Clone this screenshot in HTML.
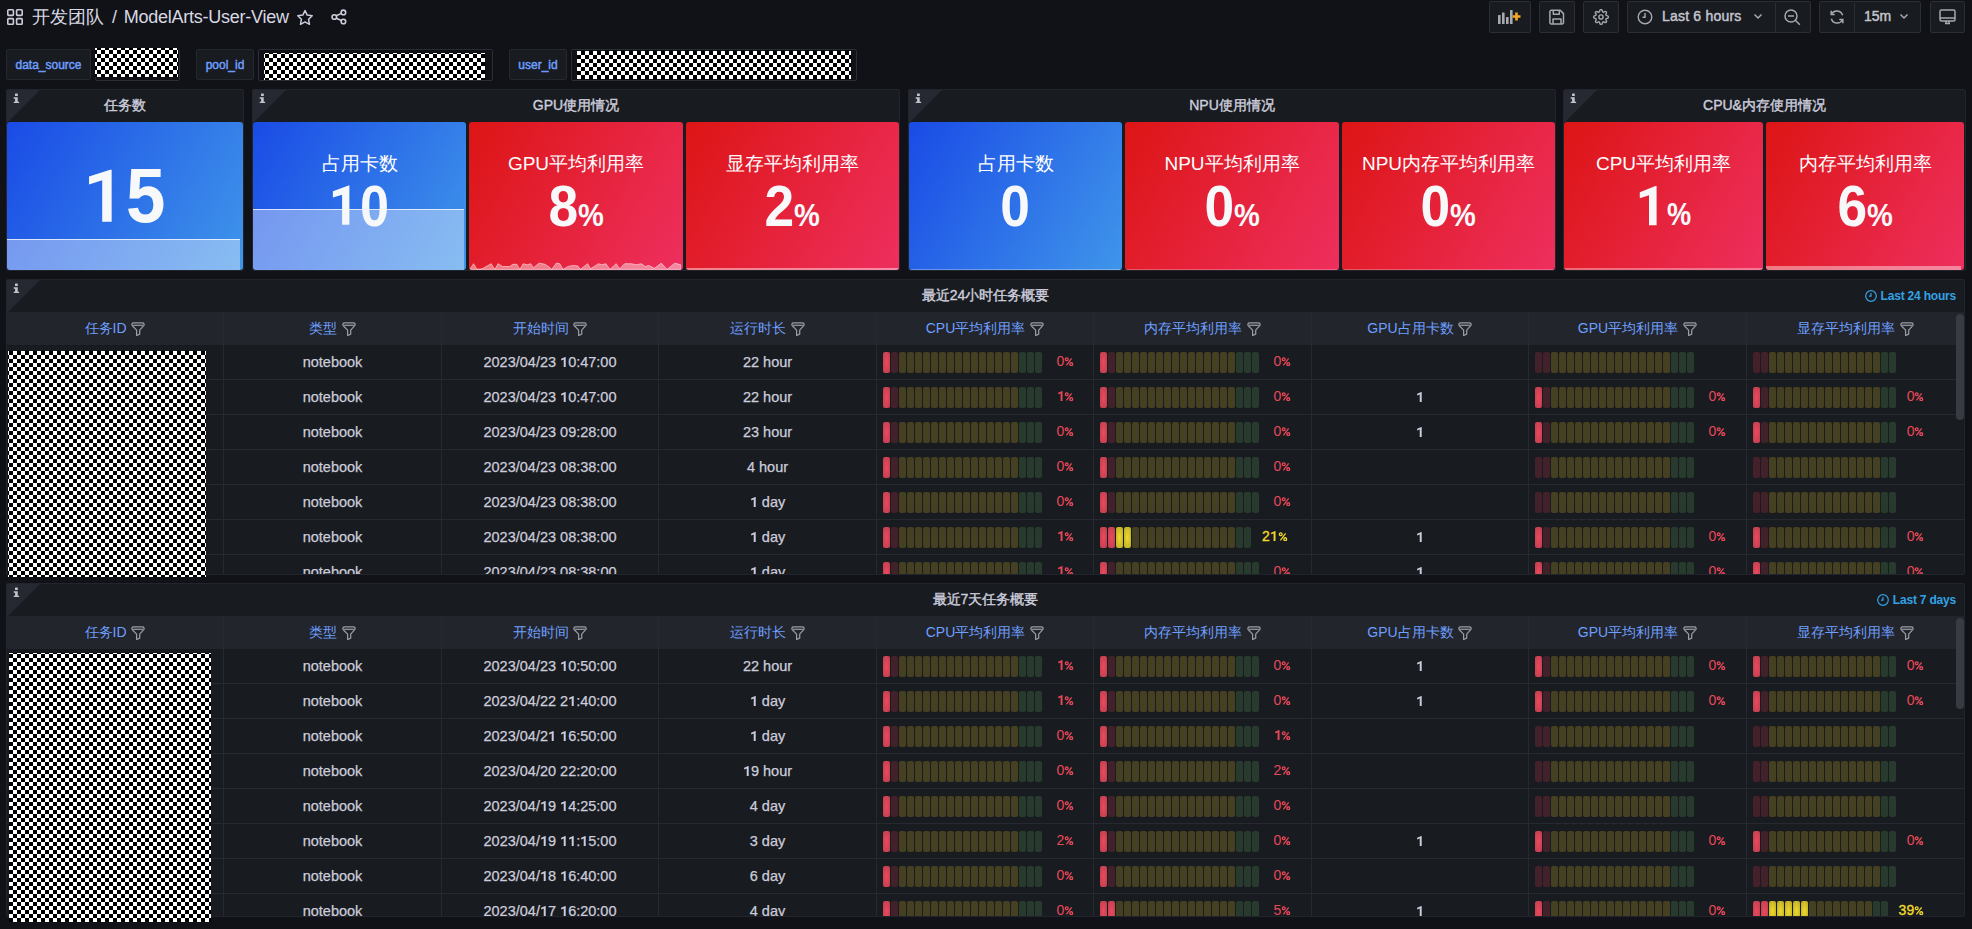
<!DOCTYPE html><html><head><meta charset="utf-8"><style>
*{box-sizing:border-box;margin:0;padding:0}
html,body{width:1972px;height:929px;overflow:hidden;background:#111217;font-family:'Liberation Sans',sans-serif;color:#ccccdc}
.a{position:absolute}
.btn{position:absolute;top:1px;height:32px;background:#181b1f;border:1px solid #2b2e35;border-radius:2px}
.lbl{position:absolute;top:49px;height:31px;background:#181b1f;border:1px solid #25282e;border-radius:2px;color:#6e9fff;font-size:12px;font-weight:400;-webkit-text-stroke:0.45px #6e9fff;line-height:31px;text-align:center}
.vbox{position:absolute;top:49px;height:32px;border:1px solid #2b2e35;border-radius:2px;background:#111217}
.chk{position:absolute;background-image:conic-gradient(#000 0 25%,#fff 0 50%,#000 0 75%,#fff 0 100%);background-size:8px 8px}
.panel{position:absolute;background:#181b1f;border:1px solid #22252b;border-radius:2px;overflow:hidden}
.corner{position:absolute;left:0;top:0;width:0;height:0;border-top:33px solid #262932;border-right:33px solid transparent}
.ci{position:absolute;left:5.5px;top:2.6px}
.ptitle{position:absolute;top:-1px;height:32px;line-height:32px;font-size:14px;font-weight:400;-webkit-text-stroke:0.4px #ccccdc;color:#ccccdc;text-align:center;white-space:nowrap}
.stat{position:absolute;border-radius:3px;overflow:hidden}
.blue{background:linear-gradient(120deg,#1a4be6,#3f95ea)}
.red{background:linear-gradient(120deg,#dd1515,#ee2f5e)}
.st{position:absolute;left:0;right:0;text-align:center;color:#fff;font-size:19px;white-space:nowrap}
.sv{position:absolute;left:0;right:0;text-align:center;color:#f7f8fa;font-weight:700;white-space:nowrap}
.sv small{font-size:0.56em}
</style></head><body>
<svg class="a" style="left:7px;top:9px" width="16" height="16" viewBox="0 0 16 16"><g fill="none" stroke="#ccccdc" stroke-width="1.6"><rect x="0.8" y="0.8" width="5.6" height="5.6" rx="0.8"/><rect x="9.6" y="0.8" width="5.6" height="5.6" rx="0.8"/><rect x="0.8" y="9.6" width="5.6" height="5.6" rx="0.8"/><rect x="9.6" y="9.6" width="5.6" height="5.6" rx="0.8"/></g></svg>
<div class="a" style="left:32px;top:5px;font-size:18px;line-height:24px;color:#d8d9e2;white-space:nowrap">开发团队</div>
<div class="a" style="left:112px;top:5px;font-size:18px;line-height:24px;color:#d8d9e2;white-space:nowrap">/</div>
<div class="a" style="left:123.8px;top:5px;font-size:18px;line-height:24px;color:#d8d9e2;white-space:nowrap;letter-spacing:-0.25px">ModelArts-User-View</div>
<svg class="a" style="left:296px;top:9px" width="18" height="17" viewBox="0 0 18 17"><path d="M9 1.5l2.2 4.6 5 .7-3.6 3.5.9 5L9 12.9l-4.5 2.4.9-5L1.8 6.8l5-.7z" fill="none" stroke="#ccccdc" stroke-width="1.5" stroke-linejoin="round"/></svg>
<svg class="a" style="left:330px;top:8px" width="18" height="18" viewBox="0 0 18 18"><g fill="none" stroke="#ccccdc" stroke-width="1.6"><circle cx="13.4" cy="4.4" r="2.3"/><circle cx="4.3" cy="9" r="2.3"/><circle cx="13.4" cy="13.5" r="2.3"/><path d="M6.3 7.8l5.1-2.4M6.3 10.2l5.1 2.2"/></g></svg>
<div class="btn" style="left:1489px;width:42px"></div>
<div class="btn" style="left:1539px;width:36px"></div>
<div class="btn" style="left:1583px;width:36px"></div>
<div class="btn" style="left:1627px;width:184px"></div>
<div class="btn" style="left:1819px;width:102px"></div>
<div class="btn" style="left:1930px;width:35px"></div>
<div class="a" style="left:1775px;top:3px;width:1px;height:29px;background:#2b2e35"></div>
<div class="a" style="left:1854px;top:3px;width:1px;height:29px;background:#2b2e35"></div>
<svg class="a" style="left:1497px;top:9px" width="28" height="16" viewBox="0 0 28 16"><g fill="#a8a9b0"><rect x="1" y="6" width="2.6" height="9" rx="0.5"/><rect x="5" y="3.5" width="2.6" height="11.5" rx="0.5"/><rect x="9" y="8" width="2.6" height="7" rx="0.5"/><rect x="13" y="1" width="2.6" height="14" rx="0.5"/></g><path d="M15.5 7.5h8M19.5 3.5v8" stroke="#f5a623" stroke-width="2.6"/></svg>
<svg class="a" style="left:1549px;top:9px" width="16" height="16" viewBox="0 0 16 16"><g fill="none" stroke="#a8a9b0" stroke-width="1.5" stroke-linejoin="round"><path d="M2.2 1.3h9l3.3 3.3v9a1.3 1.3 0 0 1-1.3 1.3H2.2a1.3 1.3 0 0 1-1.3-1.3V2.6a1.3 1.3 0 0 1 1.3-1.3z"/><path d="M4.3 1.5v3.8h6V1.5M4 14.7V10h8v4.7"/></g></svg>
<svg class="a" style="left:1593px;top:9px" width="16" height="16" viewBox="0 0 24 24"><g fill="none" stroke="#a8a9b0" stroke-width="2.1"><circle cx="12" cy="12" r="3.2"/><path d="M19.4 15a1.65 1.65 0 0 0 .33 1.82l.06.06a2 2 0 1 1-2.83 2.83l-.06-.06a1.65 1.65 0 0 0-1.82-.33 1.65 1.65 0 0 0-1 1.51V21a2 2 0 1 1-4 0v-.09A1.65 1.65 0 0 0 9 19.4a1.65 1.65 0 0 0-1.82.33l-.06.06a2 2 0 1 1-2.83-2.83l.06-.06A1.65 1.65 0 0 0 4.68 15a1.65 1.65 0 0 0-1.51-1H3a2 2 0 1 1 0-4h.09A1.65 1.65 0 0 0 4.6 9a1.65 1.65 0 0 0-.33-1.82l-.06-.06a2 2 0 1 1 2.83-2.83l.06.06A1.65 1.65 0 0 0 9 4.68a1.65 1.65 0 0 0 1-1.51V3a2 2 0 1 1 4 0v.09a1.65 1.65 0 0 0 1 1.51 1.65 1.65 0 0 0 1.82-.33l.06-.06a2 2 0 1 1 2.83 2.83l-.06.06A1.65 1.65 0 0 0 19.4 9a1.65 1.65 0 0 0 1.51 1H21a2 2 0 1 1 0 4h-.09a1.65 1.65 0 0 0-1.51 1z"/></g></svg>
<svg class="a" style="left:1637px;top:9px" width="16" height="16" viewBox="0 0 16 16"><g fill="none" stroke="#a8a9b0" stroke-width="1.4"><circle cx="8" cy="8" r="6.8"/><path d="M8 4v4.2H5.6"/></g></svg>
<div class="a" style="left:1662px;top:8px;font-size:14px;font-weight:400;-webkit-text-stroke:0.45px #c4c5ce;color:#c4c5ce;line-height:17px;letter-spacing:0.2px">Last 6 hours</div>
<svg class="a" style="left:1753px;top:13px" width="10" height="7" viewBox="0 0 10 7"><path d="M1.5 1.5l3.5 3.5 3.5-3.5" fill="none" stroke="#a8a9b0" stroke-width="1.5"/></svg>
<svg class="a" style="left:1784px;top:9px" width="17" height="17" viewBox="0 0 17 17"><g fill="none" stroke="#a8a9b0" stroke-width="1.5"><circle cx="7" cy="7" r="6"/><path d="M4 7h6M11.3 11.3l4.5 4.5"/></g></svg>
<svg class="a" style="left:1829px;top:9px" width="16" height="16" viewBox="0 0 16 16"><g fill="none" stroke="#a8a9b0" stroke-width="1.5"><path d="M13.6 6.3A6 6 0 0 0 2.6 5"/><path d="M2.4 9.7A6 6 0 0 0 13.4 11"/><path d="M2.2 1.8V5.4h3.5M13.8 14.2v-3.6h-3.5"/></g></svg>
<div class="a" style="left:1864px;top:8px;font-size:14px;font-weight:400;-webkit-text-stroke:0.45px #c4c5ce;color:#c4c5ce;line-height:17px">15m</div>
<svg class="a" style="left:1899px;top:13px" width="10" height="7" viewBox="0 0 10 7"><path d="M1.5 1.5l3.5 3.5 3.5-3.5" fill="none" stroke="#a8a9b0" stroke-width="1.5"/></svg>
<svg class="a" style="left:1939px;top:9px" width="17" height="16" viewBox="0 0 17 16"><g fill="none" stroke="#a8a9b0" stroke-width="1.5"><rect x="1" y="1" width="15" height="11" rx="1.5"/><path d="M1 9h15M6 14.5h5"/><path d="M7 12v2.5M10 12v2.5"/></g></svg>
<div class="lbl" style="left:6px;width:85px">data_source</div>
<div class="vbox" style="left:95px;width:85px"></div>
<div class="chk" style="left:95px;top:48px;width:83px;height:29px;background-position:6px 6px"></div>
<div class="lbl" style="left:196px;width:58px">pool_id</div>
<div class="vbox" style="left:258px;width:235px"></div>
<div class="chk" style="left:264px;top:53px;width:221px;height:27px;background-position:5px 1px"></div>
<div class="lbl" style="left:509px;width:58px">user_id</div>
<div class="vbox" style="left:571px;width:286px"></div>
<div class="chk" style="left:577px;top:51px;width:274px;height:28px;background-position:4px 4px"></div>
<div class="panel" style="left:6px;top:89px;width:238px;height:182px"><div class="corner"></div><svg class="ci" width="7" height="10.5" viewBox="0 0 8 12"><rect x="2.3" y="0.5" width="3.2" height="3" rx="0.6" fill="#c4c4cc"/><path d="M0.8 4.8h4.6v5.2h1.6v1.7H0.8V10h1.6V6.5H0.8z" fill="#c4c4cc"/></svg>
<div class="ptitle" style="left:0;right:0">任务数</div>
</div>
<div class="panel" style="left:252px;top:89px;width:648px;height:182px"><div class="corner"></div><svg class="ci" width="7" height="10.5" viewBox="0 0 8 12"><rect x="2.3" y="0.5" width="3.2" height="3" rx="0.6" fill="#c4c4cc"/><path d="M0.8 4.8h4.6v5.2h1.6v1.7H0.8V10h1.6V6.5H0.8z" fill="#c4c4cc"/></svg>
<div class="ptitle" style="left:0;right:0">GPU使用情况</div>
</div>
<div class="panel" style="left:908px;top:89px;width:648px;height:182px"><div class="corner"></div><svg class="ci" width="7" height="10.5" viewBox="0 0 8 12"><rect x="2.3" y="0.5" width="3.2" height="3" rx="0.6" fill="#c4c4cc"/><path d="M0.8 4.8h4.6v5.2h1.6v1.7H0.8V10h1.6V6.5H0.8z" fill="#c4c4cc"/></svg>
<div class="ptitle" style="left:0;right:0">NPU使用情况</div>
</div>
<div class="panel" style="left:1563px;top:89px;width:403px;height:182px"><div class="corner"></div><svg class="ci" width="7" height="10.5" viewBox="0 0 8 12"><rect x="2.3" y="0.5" width="3.2" height="3" rx="0.6" fill="#c4c4cc"/><path d="M0.8 4.8h4.6v5.2h1.6v1.7H0.8V10h1.6V6.5H0.8z" fill="#c4c4cc"/></svg>
<div class="ptitle" style="left:0;right:0">CPU&amp;内存使用情况</div>
</div>
<div class="stat blue" style="left:7px;top:122px;width:236px;height:148px">
<div class="a" style="left:0;top:117px;width:233px;bottom:0;background:rgba(255,255,255,0.38);border-top:1px solid rgba(255,255,255,0.75)"></div>
<div class="sv" style="top:33.5px;height:78px;line-height:78px;font-size:78px"><span style="display:inline-block;transform:scaleX(0.95)"></span></div>
</div>
<svg class="a" style="left:7px;top:122px" width="236" height="148"><path d="M104.65 47.8V99.8H95.2V58.3L82 62.5V54.6L103.1 47.8Z" fill="#f7f8fa"/></svg>
<div class="a" style="left:126px;top:157px;height:77px;line-height:77px;font-size:77px;font-weight:700;color:#f7f8fa;transform:scaleX(0.92);transform-origin:0 0">5</div>
<div class="stat blue" style="left:253px;top:122px;width:213px;height:148px">
<div class="a" style="left:0;top:87px;width:211px;bottom:0;background:rgba(255,255,255,0.38);border-top:1px solid rgba(255,255,255,0.75)"></div>
<div class="st" style="top:30px;height:24px;line-height:24px">占用卡数</div>
</div>
<svg class="a" style="left:253px;top:122px" width="213" height="148"><path d="M96.4 63.6V102.8H89.1V72.8L79.9 75.6V69.2L95.6 63.6Z" fill="#f7f8fa"/></svg>
<div class="a" style="left:360px;top:177px;height:58px;line-height:58px;font-size:58px;font-weight:700;color:#f7f8fa;transform:scaleX(0.9);transform-origin:0 0">0</div>
<div class="stat red" style="left:469px;top:122px;width:214px;height:148px">
<svg class="a" style="left:0;top:0" width="214" height="148"><path d="M0.6 147.4 L4.6 141.7 L8.0 147.4 L13.1 146.8 L22.2 141.7 L25.7 147.4 L29.1 141.7 L33.7 144.5 L40.5 144.5 L43.9 142.3 L47.9 142.3 L50.8 147.4 L54.2 141.7 L58.2 142.8 L61.6 141.7 L64.5 145.7 L70.2 141.1 L75.9 142.3 L80.4 145.1 L82.7 147.4 L87.3 141.1 L90.7 141.7 L94.1 147.4 L98.7 144.5 L104.4 143.4 L109.0 144.0 L111.2 147.4 L118.7 141.7 L121.5 146.8 L129.5 141.7 L132.9 142.8 L136.9 141.7 L140.9 147.4 L147.2 141.7 L150.6 146.8 L155.7 141.7 L162.6 141.7 L167.2 142.8 L172.3 141.7 L176.3 144.5 L179.7 143.4 L185.4 146.3 L192.3 141.1 L198.0 147.4 L205.9 141.1 L211.7 142.8 L211.7 147.4 Z" fill="rgba(255,255,255,0.42)" stroke="rgba(255,255,255,0.5)" stroke-width="1" stroke-linejoin="round"/></svg>
<div class="st" style="top:30px;height:24px;line-height:24px">GPU平均利用率</div>
<div class="sv" style="top:54.5px;height:58px;line-height:58px;font-size:58px"><span style="display:inline-block;transform:scaleX(0.92)">8<span style="font-size:0.545em">%</span></span></div>
</div>
<div class="stat red" style="left:686px;top:122px;width:213px;height:148px">
<div class="a" style="left:0;bottom:0;width:213px;height:2px;background:rgba(255,255,255,0.45)"></div>
<div class="st" style="top:30px;height:24px;line-height:24px">显存平均利用率</div>
<div class="sv" style="top:54.5px;height:58px;line-height:58px;font-size:58px"><span style="display:inline-block;transform:scaleX(0.92)">2<span style="font-size:0.545em">%</span></span></div>
</div>
<div class="stat blue" style="left:909px;top:122px;width:213px;height:148px">
<div class="a" style="left:0;bottom:0;width:213px;height:1px;background:rgba(255,255,255,0.3)"></div>
<div class="st" style="top:30px;height:24px;line-height:24px">占用卡数</div>
<div class="sv" style="top:54.5px;height:58px;line-height:58px;font-size:58px"><span style="display:inline-block;transform:scaleX(0.92)">0</span></div>
</div>
<div class="stat red" style="left:1125px;top:122px;width:214px;height:148px">
<div class="a" style="left:0;bottom:0;width:214px;height:1px;background:rgba(255,255,255,0.25)"></div>
<div class="st" style="top:30px;height:24px;line-height:24px">NPU平均利用率</div>
<div class="sv" style="top:54.5px;height:58px;line-height:58px;font-size:58px"><span style="display:inline-block;transform:scaleX(0.92)">0<span style="font-size:0.545em">%</span></span></div>
</div>
<div class="stat red" style="left:1342px;top:122px;width:213px;height:148px">
<div class="a" style="left:0;bottom:0;width:213px;height:1px;background:rgba(255,255,255,0.25)"></div>
<div class="st" style="top:30px;height:24px;line-height:24px">NPU内存平均利用率</div>
<div class="sv" style="top:54.5px;height:58px;line-height:58px;font-size:58px"><span style="display:inline-block;transform:scaleX(0.92)">0<span style="font-size:0.545em">%</span></span></div>
</div>
<div class="stat red" style="left:1564px;top:122px;width:199px;height:148px">
<div class="a" style="left:0;bottom:0;width:199px;height:2px;background:rgba(255,255,255,0.35)"></div>
<div class="st" style="top:30px;height:24px;line-height:24px">CPU平均利用率</div>
</div>
<svg class="a" style="left:1564px;top:122px" width="199" height="148"><path d="M92.6 63.9V103.2H85V73.2L75.8 76.2V70.2L91.5 63.9Z" fill="#f7f8fa"/></svg>
<div class="a" style="left:1666.5px;top:194px;height:40px;line-height:40px;font-size:31.6px;font-weight:700;color:#f7f8fa;transform:scaleX(0.86);transform-origin:0 0">%</div>
<div class="stat red" style="left:1766px;top:122px;width:198px;height:148px">
<div class="a" style="left:0;bottom:0;width:195px;height:4px;background:rgba(255,255,255,0.42)"></div>
<div class="st" style="top:30px;height:24px;line-height:24px">内存平均利用率</div>
<div class="sv" style="top:54.5px;height:58px;line-height:58px;font-size:58px"><span style="display:inline-block;transform:scaleX(0.92)">6<span style="font-size:0.545em">%</span></span></div>
</div>
<style>
.th{position:absolute;height:33px;background:#22252b}
.hd{position:absolute;top:0;height:33px;line-height:33px;color:#6e9fff;font-size:14px;text-align:center;white-space:nowrap}
.td{position:absolute;color:#ccccdc;-webkit-text-stroke:0.25px #ccccdc;font-size:14.5px;text-align:center;white-space:nowrap;height:35px;line-height:35px}
.vl{position:absolute;width:1px;background:#26292f}
.hl{position:absolute;height:1px;background:#26292f}
.cell{position:absolute;top:0;width:7px;height:21px;border-radius:2px}
.rl{background:radial-gradient(ellipse at center,#ea4a5c 0%,#bd3e4f 100%)}
.yl{background:radial-gradient(ellipse at center,#f0da2a 0%,#b8a828 100%)}
.rd{background:#43212a}.yd{background:#454021}.gd{background:#283a2e}
.pv{position:absolute;font-size:14px;line-height:21px;white-space:nowrap}
.pc{display:inline-block;transform:scaleX(0.8);transform-origin:0 0}
</style>
<div class="panel" style="left:6px;top:279px;width:1959px;height:296px">
<div class="corner"></div><svg class="ci" width="7" height="10.5" viewBox="0 0 8 12"><rect x="2.3" y="0.5" width="3.2" height="3" rx="0.6" fill="#c4c4cc"/><path d="M0.8 4.8h4.6v5.2h1.6v1.7H0.8V10h1.6V6.5H0.8z" fill="#c4c4cc"/></svg>
<div class="ptitle" style="left:0;right:0">最近24小时任务概要</div>
</div>
<div class="a" style="right:16px;top:289px;font-size:12px;font-weight:700;letter-spacing:-0.2px;color:#33a2e5;line-height:15px;white-space:nowrap"><svg style="display:inline-block;vertical-align:middle;margin-right:4px;margin-top:-1px" width="12" height="12" viewBox="0 0 12 12"><g fill="none" stroke="#33a2e5" stroke-width="1.2"><circle cx="6" cy="6" r="5.3"/><path d="M6 3v3.2H4"/></g></svg>Last 24 hours</div>
<div class="th" style="left:7px;top:312px;width:1957px"></div>
<div class="hd" style="left:7px;top:312px;width:216px">任务ID<svg style="display:inline-block;vertical-align:middle;margin-left:5px;margin-top:-3px;position:relative;top:0.8px;left:-0.5px" width="14" height="14" viewBox="0 0 14 14"><g fill="none" stroke="#9a9ba4" stroke-width="1.25" stroke-linejoin="round"><path d="M2.6 0.9H11.4A1.7 1.7 0 0 1 12.7 3.7L8.7 8.1V12.2L5.6 13.5V8.1L1.3 3.7A1.7 1.7 0 0 1 2.6 0.9Z"/><path d="M2.2 3.3H11.8"/></g></svg></div>
<div class="hd" style="left:224px;top:312px;width:217px">类型<svg style="display:inline-block;vertical-align:middle;margin-left:5px;margin-top:-3px;position:relative;top:0.8px;left:-0.5px" width="14" height="14" viewBox="0 0 14 14"><g fill="none" stroke="#9a9ba4" stroke-width="1.25" stroke-linejoin="round"><path d="M2.6 0.9H11.4A1.7 1.7 0 0 1 12.7 3.7L8.7 8.1V12.2L5.6 13.5V8.1L1.3 3.7A1.7 1.7 0 0 1 2.6 0.9Z"/><path d="M2.2 3.3H11.8"/></g></svg></div>
<div class="hd" style="left:442px;top:312px;width:216px">开始时间<svg style="display:inline-block;vertical-align:middle;margin-left:5px;margin-top:-3px;position:relative;top:0.8px;left:-0.5px" width="14" height="14" viewBox="0 0 14 14"><g fill="none" stroke="#9a9ba4" stroke-width="1.25" stroke-linejoin="round"><path d="M2.6 0.9H11.4A1.7 1.7 0 0 1 12.7 3.7L8.7 8.1V12.2L5.6 13.5V8.1L1.3 3.7A1.7 1.7 0 0 1 2.6 0.9Z"/><path d="M2.2 3.3H11.8"/></g></svg></div>
<div class="hd" style="left:659px;top:312px;width:217px">运行时长<svg style="display:inline-block;vertical-align:middle;margin-left:5px;margin-top:-3px;position:relative;top:0.8px;left:-0.5px" width="14" height="14" viewBox="0 0 14 14"><g fill="none" stroke="#9a9ba4" stroke-width="1.25" stroke-linejoin="round"><path d="M2.6 0.9H11.4A1.7 1.7 0 0 1 12.7 3.7L8.7 8.1V12.2L5.6 13.5V8.1L1.3 3.7A1.7 1.7 0 0 1 2.6 0.9Z"/><path d="M2.2 3.3H11.8"/></g></svg></div>
<div class="hd" style="left:877px;top:312px;width:216px">CPU平均利用率<svg style="display:inline-block;vertical-align:middle;margin-left:5px;margin-top:-3px;position:relative;top:0.8px;left:-0.5px" width="14" height="14" viewBox="0 0 14 14"><g fill="none" stroke="#9a9ba4" stroke-width="1.25" stroke-linejoin="round"><path d="M2.6 0.9H11.4A1.7 1.7 0 0 1 12.7 3.7L8.7 8.1V12.2L5.6 13.5V8.1L1.3 3.7A1.7 1.7 0 0 1 2.6 0.9Z"/><path d="M2.2 3.3H11.8"/></g></svg></div>
<div class="hd" style="left:1094px;top:312px;width:217px">内存平均利用率<svg style="display:inline-block;vertical-align:middle;margin-left:5px;margin-top:-3px;position:relative;top:0.8px;left:-0.5px" width="14" height="14" viewBox="0 0 14 14"><g fill="none" stroke="#9a9ba4" stroke-width="1.25" stroke-linejoin="round"><path d="M2.6 0.9H11.4A1.7 1.7 0 0 1 12.7 3.7L8.7 8.1V12.2L5.6 13.5V8.1L1.3 3.7A1.7 1.7 0 0 1 2.6 0.9Z"/><path d="M2.2 3.3H11.8"/></g></svg></div>
<div class="hd" style="left:1312px;top:312px;width:216px">GPU占用卡数<svg style="display:inline-block;vertical-align:middle;margin-left:5px;margin-top:-3px;position:relative;top:0.8px;left:-0.5px" width="14" height="14" viewBox="0 0 14 14"><g fill="none" stroke="#9a9ba4" stroke-width="1.25" stroke-linejoin="round"><path d="M2.6 0.9H11.4A1.7 1.7 0 0 1 12.7 3.7L8.7 8.1V12.2L5.6 13.5V8.1L1.3 3.7A1.7 1.7 0 0 1 2.6 0.9Z"/><path d="M2.2 3.3H11.8"/></g></svg></div>
<div class="hd" style="left:1529px;top:312px;width:217px">GPU平均利用率<svg style="display:inline-block;vertical-align:middle;margin-left:5px;margin-top:-3px;position:relative;top:0.8px;left:-0.5px" width="14" height="14" viewBox="0 0 14 14"><g fill="none" stroke="#9a9ba4" stroke-width="1.25" stroke-linejoin="round"><path d="M2.6 0.9H11.4A1.7 1.7 0 0 1 12.7 3.7L8.7 8.1V12.2L5.6 13.5V8.1L1.3 3.7A1.7 1.7 0 0 1 2.6 0.9Z"/><path d="M2.2 3.3H11.8"/></g></svg></div>
<div class="hd" style="left:1747px;top:312px;width:217px">显存平均利用率<svg style="display:inline-block;vertical-align:middle;margin-left:5px;margin-top:-3px;position:relative;top:0.8px;left:-0.5px" width="14" height="14" viewBox="0 0 14 14"><g fill="none" stroke="#9a9ba4" stroke-width="1.25" stroke-linejoin="round"><path d="M2.6 0.9H11.4A1.7 1.7 0 0 1 12.7 3.7L8.7 8.1V12.2L5.6 13.5V8.1L1.3 3.7A1.7 1.7 0 0 1 2.6 0.9Z"/><path d="M2.2 3.3H11.8"/></g></svg></div>
<div class="vl" style="left:223px;top:312px;height:262px"></div>
<div class="vl" style="left:441px;top:312px;height:262px"></div>
<div class="vl" style="left:658px;top:312px;height:262px"></div>
<div class="vl" style="left:876px;top:312px;height:262px"></div>
<div class="vl" style="left:1093px;top:312px;height:262px"></div>
<div class="vl" style="left:1311px;top:312px;height:262px"></div>
<div class="vl" style="left:1528px;top:312px;height:262px"></div>
<div class="vl" style="left:1746px;top:312px;height:262px"></div>
<div class="a" style="left:7px;top:345px;width:1957px;height:229px;overflow:hidden">
<div class="hl" style="left:0;top:34px;width:1957px"></div>
<div class="td" style="left:217px;top:0px;width:217px">notebook</div>
<div class="td" style="left:435px;top:0px;width:216px">2023/04/23 <svg width="8.06" height="10.38" style="vertical-align:baseline;display:inline-block"><path d="M5.70 0V10.38H3.73V2.59L1.14 3.42V1.76L5.28 0Z" fill="#ccccdc"/></svg>0:47:00</div>
<div class="td" style="left:652px;top:0px;width:217px">22 hour</div>
<div class="a" style="left:876px;top:7px;width:160px;height:21px"><div class="cell rl" style="left:0px"></div><div class="cell rd" style="left:8px"></div><div class="cell yd" style="left:16px"></div><div class="cell yd" style="left:24px"></div><div class="cell yd" style="left:32px"></div><div class="cell yd" style="left:40px"></div><div class="cell yd" style="left:48px"></div><div class="cell yd" style="left:56px"></div><div class="cell yd" style="left:64px"></div><div class="cell yd" style="left:72px"></div><div class="cell yd" style="left:80px"></div><div class="cell yd" style="left:88px"></div><div class="cell yd" style="left:96px"></div><div class="cell yd" style="left:104px"></div><div class="cell yd" style="left:112px"></div><div class="cell yd" style="left:120px"></div><div class="cell yd" style="left:128px"></div><div class="cell gd" style="left:136px"></div><div class="cell gd" style="left:144px"></div><div class="cell gd" style="left:152px"></div></div>
<div class="pv" style="left:1049.5px;top:6px;color:#e8485a">0<svg width="10" height="10.4" style="vertical-align:baseline;display:inline-block"><g fill="none" stroke="#e8485a" stroke-width="1.3"><circle cx="2.75" cy="3.25" r="1.4"/><circle cx="7.25" cy="8.15" r="1.4"/></g><path d="M2.4 9.3L7.6 2.3" stroke="#e8485a" stroke-width="1.25"/></svg></div>
<div class="a" style="left:1093px;top:7px;width:160px;height:21px"><div class="cell rl" style="left:0px"></div><div class="cell rd" style="left:8px"></div><div class="cell yd" style="left:16px"></div><div class="cell yd" style="left:24px"></div><div class="cell yd" style="left:32px"></div><div class="cell yd" style="left:40px"></div><div class="cell yd" style="left:48px"></div><div class="cell yd" style="left:56px"></div><div class="cell yd" style="left:64px"></div><div class="cell yd" style="left:72px"></div><div class="cell yd" style="left:80px"></div><div class="cell yd" style="left:88px"></div><div class="cell yd" style="left:96px"></div><div class="cell yd" style="left:104px"></div><div class="cell yd" style="left:112px"></div><div class="cell yd" style="left:120px"></div><div class="cell yd" style="left:128px"></div><div class="cell gd" style="left:136px"></div><div class="cell gd" style="left:144px"></div><div class="cell gd" style="left:152px"></div></div>
<div class="pv" style="left:1266.5px;top:6px;color:#e8485a">0<svg width="10" height="10.4" style="vertical-align:baseline;display:inline-block"><g fill="none" stroke="#e8485a" stroke-width="1.3"><circle cx="2.75" cy="3.25" r="1.4"/><circle cx="7.25" cy="8.15" r="1.4"/></g><path d="M2.4 9.3L7.6 2.3" stroke="#e8485a" stroke-width="1.25"/></svg></div>
<div class="a" style="left:1528px;top:7px;width:160px;height:21px"><div class="cell rd" style="left:0px"></div><div class="cell rd" style="left:8px"></div><div class="cell yd" style="left:16px"></div><div class="cell yd" style="left:24px"></div><div class="cell yd" style="left:32px"></div><div class="cell yd" style="left:40px"></div><div class="cell yd" style="left:48px"></div><div class="cell yd" style="left:56px"></div><div class="cell yd" style="left:64px"></div><div class="cell yd" style="left:72px"></div><div class="cell yd" style="left:80px"></div><div class="cell yd" style="left:88px"></div><div class="cell yd" style="left:96px"></div><div class="cell yd" style="left:104px"></div><div class="cell yd" style="left:112px"></div><div class="cell yd" style="left:120px"></div><div class="cell yd" style="left:128px"></div><div class="cell gd" style="left:136px"></div><div class="cell gd" style="left:144px"></div><div class="cell gd" style="left:152px"></div></div>
<div class="a" style="left:1746px;top:7px;width:144px;height:21px"><div class="cell rd" style="left:0px"></div><div class="cell rd" style="left:8px"></div><div class="cell yd" style="left:16px"></div><div class="cell yd" style="left:24px"></div><div class="cell yd" style="left:32px"></div><div class="cell yd" style="left:40px"></div><div class="cell yd" style="left:48px"></div><div class="cell yd" style="left:56px"></div><div class="cell yd" style="left:64px"></div><div class="cell yd" style="left:72px"></div><div class="cell yd" style="left:80px"></div><div class="cell yd" style="left:88px"></div><div class="cell yd" style="left:96px"></div><div class="cell yd" style="left:104px"></div><div class="cell yd" style="left:112px"></div><div class="cell yd" style="left:120px"></div><div class="cell gd" style="left:128px"></div><div class="cell gd" style="left:136px"></div></div>
<div class="hl" style="left:0;top:69px;width:1957px"></div>
<div class="td" style="left:217px;top:35px;width:217px">notebook</div>
<div class="td" style="left:435px;top:35px;width:216px">2023/04/23 <svg width="8.06" height="10.38" style="vertical-align:baseline;display:inline-block"><path d="M5.70 0V10.38H3.73V2.59L1.14 3.42V1.76L5.28 0Z" fill="#ccccdc"/></svg>0:47:00</div>
<div class="td" style="left:652px;top:35px;width:217px">22 hour</div>
<div class="td" style="left:1305px;top:35px;width:216px"><svg width="8.06" height="10.38" style="vertical-align:baseline;display:inline-block"><path d="M5.70 0V10.38H3.73V2.59L1.14 3.42V1.76L5.28 0Z" fill="#ccccdc"/></svg></div>
<div class="a" style="left:876px;top:42px;width:160px;height:21px"><div class="cell rl" style="left:0px"></div><div class="cell rd" style="left:8px"></div><div class="cell yd" style="left:16px"></div><div class="cell yd" style="left:24px"></div><div class="cell yd" style="left:32px"></div><div class="cell yd" style="left:40px"></div><div class="cell yd" style="left:48px"></div><div class="cell yd" style="left:56px"></div><div class="cell yd" style="left:64px"></div><div class="cell yd" style="left:72px"></div><div class="cell yd" style="left:80px"></div><div class="cell yd" style="left:88px"></div><div class="cell yd" style="left:96px"></div><div class="cell yd" style="left:104px"></div><div class="cell yd" style="left:112px"></div><div class="cell yd" style="left:120px"></div><div class="cell yd" style="left:128px"></div><div class="cell gd" style="left:136px"></div><div class="cell gd" style="left:144px"></div><div class="cell gd" style="left:152px"></div></div>
<div class="pv" style="left:1049.5px;top:41px;color:#e8485a"><svg width="7.78" height="10.02" style="vertical-align:baseline;display:inline-block"><path d="M5.50 0V10.02H3.60V2.50L1.10 3.30V1.70L5.10 0Z" fill="#e8485a"/></svg><svg width="10" height="10.4" style="vertical-align:baseline;display:inline-block"><g fill="none" stroke="#e8485a" stroke-width="1.3"><circle cx="2.75" cy="3.25" r="1.4"/><circle cx="7.25" cy="8.15" r="1.4"/></g><path d="M2.4 9.3L7.6 2.3" stroke="#e8485a" stroke-width="1.25"/></svg></div>
<div class="a" style="left:1093px;top:42px;width:160px;height:21px"><div class="cell rl" style="left:0px"></div><div class="cell rd" style="left:8px"></div><div class="cell yd" style="left:16px"></div><div class="cell yd" style="left:24px"></div><div class="cell yd" style="left:32px"></div><div class="cell yd" style="left:40px"></div><div class="cell yd" style="left:48px"></div><div class="cell yd" style="left:56px"></div><div class="cell yd" style="left:64px"></div><div class="cell yd" style="left:72px"></div><div class="cell yd" style="left:80px"></div><div class="cell yd" style="left:88px"></div><div class="cell yd" style="left:96px"></div><div class="cell yd" style="left:104px"></div><div class="cell yd" style="left:112px"></div><div class="cell yd" style="left:120px"></div><div class="cell yd" style="left:128px"></div><div class="cell gd" style="left:136px"></div><div class="cell gd" style="left:144px"></div><div class="cell gd" style="left:152px"></div></div>
<div class="pv" style="left:1266.5px;top:41px;color:#e8485a">0<svg width="10" height="10.4" style="vertical-align:baseline;display:inline-block"><g fill="none" stroke="#e8485a" stroke-width="1.3"><circle cx="2.75" cy="3.25" r="1.4"/><circle cx="7.25" cy="8.15" r="1.4"/></g><path d="M2.4 9.3L7.6 2.3" stroke="#e8485a" stroke-width="1.25"/></svg></div>
<div class="a" style="left:1528px;top:42px;width:160px;height:21px"><div class="cell rl" style="left:0px"></div><div class="cell rd" style="left:8px"></div><div class="cell yd" style="left:16px"></div><div class="cell yd" style="left:24px"></div><div class="cell yd" style="left:32px"></div><div class="cell yd" style="left:40px"></div><div class="cell yd" style="left:48px"></div><div class="cell yd" style="left:56px"></div><div class="cell yd" style="left:64px"></div><div class="cell yd" style="left:72px"></div><div class="cell yd" style="left:80px"></div><div class="cell yd" style="left:88px"></div><div class="cell yd" style="left:96px"></div><div class="cell yd" style="left:104px"></div><div class="cell yd" style="left:112px"></div><div class="cell yd" style="left:120px"></div><div class="cell yd" style="left:128px"></div><div class="cell gd" style="left:136px"></div><div class="cell gd" style="left:144px"></div><div class="cell gd" style="left:152px"></div></div>
<div class="pv" style="left:1701.5px;top:41px;color:#e8485a">0<svg width="10" height="10.4" style="vertical-align:baseline;display:inline-block"><g fill="none" stroke="#e8485a" stroke-width="1.3"><circle cx="2.75" cy="3.25" r="1.4"/><circle cx="7.25" cy="8.15" r="1.4"/></g><path d="M2.4 9.3L7.6 2.3" stroke="#e8485a" stroke-width="1.25"/></svg></div>
<div class="a" style="left:1746px;top:42px;width:144px;height:21px"><div class="cell rl" style="left:0px"></div><div class="cell rd" style="left:8px"></div><div class="cell yd" style="left:16px"></div><div class="cell yd" style="left:24px"></div><div class="cell yd" style="left:32px"></div><div class="cell yd" style="left:40px"></div><div class="cell yd" style="left:48px"></div><div class="cell yd" style="left:56px"></div><div class="cell yd" style="left:64px"></div><div class="cell yd" style="left:72px"></div><div class="cell yd" style="left:80px"></div><div class="cell yd" style="left:88px"></div><div class="cell yd" style="left:96px"></div><div class="cell yd" style="left:104px"></div><div class="cell yd" style="left:112px"></div><div class="cell yd" style="left:120px"></div><div class="cell gd" style="left:128px"></div><div class="cell gd" style="left:136px"></div></div>
<div class="pv" style="left:1899.7px;top:41px;color:#e8485a">0<svg width="10" height="10.4" style="vertical-align:baseline;display:inline-block"><g fill="none" stroke="#e8485a" stroke-width="1.3"><circle cx="2.75" cy="3.25" r="1.4"/><circle cx="7.25" cy="8.15" r="1.4"/></g><path d="M2.4 9.3L7.6 2.3" stroke="#e8485a" stroke-width="1.25"/></svg></div>
<div class="hl" style="left:0;top:104px;width:1957px"></div>
<div class="td" style="left:217px;top:70px;width:217px">notebook</div>
<div class="td" style="left:435px;top:70px;width:216px">2023/04/23 09:28:00</div>
<div class="td" style="left:652px;top:70px;width:217px">23 hour</div>
<div class="td" style="left:1305px;top:70px;width:216px"><svg width="8.06" height="10.38" style="vertical-align:baseline;display:inline-block"><path d="M5.70 0V10.38H3.73V2.59L1.14 3.42V1.76L5.28 0Z" fill="#ccccdc"/></svg></div>
<div class="a" style="left:876px;top:77px;width:160px;height:21px"><div class="cell rl" style="left:0px"></div><div class="cell rd" style="left:8px"></div><div class="cell yd" style="left:16px"></div><div class="cell yd" style="left:24px"></div><div class="cell yd" style="left:32px"></div><div class="cell yd" style="left:40px"></div><div class="cell yd" style="left:48px"></div><div class="cell yd" style="left:56px"></div><div class="cell yd" style="left:64px"></div><div class="cell yd" style="left:72px"></div><div class="cell yd" style="left:80px"></div><div class="cell yd" style="left:88px"></div><div class="cell yd" style="left:96px"></div><div class="cell yd" style="left:104px"></div><div class="cell yd" style="left:112px"></div><div class="cell yd" style="left:120px"></div><div class="cell yd" style="left:128px"></div><div class="cell gd" style="left:136px"></div><div class="cell gd" style="left:144px"></div><div class="cell gd" style="left:152px"></div></div>
<div class="pv" style="left:1049.5px;top:76px;color:#e8485a">0<svg width="10" height="10.4" style="vertical-align:baseline;display:inline-block"><g fill="none" stroke="#e8485a" stroke-width="1.3"><circle cx="2.75" cy="3.25" r="1.4"/><circle cx="7.25" cy="8.15" r="1.4"/></g><path d="M2.4 9.3L7.6 2.3" stroke="#e8485a" stroke-width="1.25"/></svg></div>
<div class="a" style="left:1093px;top:77px;width:160px;height:21px"><div class="cell rl" style="left:0px"></div><div class="cell rd" style="left:8px"></div><div class="cell yd" style="left:16px"></div><div class="cell yd" style="left:24px"></div><div class="cell yd" style="left:32px"></div><div class="cell yd" style="left:40px"></div><div class="cell yd" style="left:48px"></div><div class="cell yd" style="left:56px"></div><div class="cell yd" style="left:64px"></div><div class="cell yd" style="left:72px"></div><div class="cell yd" style="left:80px"></div><div class="cell yd" style="left:88px"></div><div class="cell yd" style="left:96px"></div><div class="cell yd" style="left:104px"></div><div class="cell yd" style="left:112px"></div><div class="cell yd" style="left:120px"></div><div class="cell yd" style="left:128px"></div><div class="cell gd" style="left:136px"></div><div class="cell gd" style="left:144px"></div><div class="cell gd" style="left:152px"></div></div>
<div class="pv" style="left:1266.5px;top:76px;color:#e8485a">0<svg width="10" height="10.4" style="vertical-align:baseline;display:inline-block"><g fill="none" stroke="#e8485a" stroke-width="1.3"><circle cx="2.75" cy="3.25" r="1.4"/><circle cx="7.25" cy="8.15" r="1.4"/></g><path d="M2.4 9.3L7.6 2.3" stroke="#e8485a" stroke-width="1.25"/></svg></div>
<div class="a" style="left:1528px;top:77px;width:160px;height:21px"><div class="cell rl" style="left:0px"></div><div class="cell rd" style="left:8px"></div><div class="cell yd" style="left:16px"></div><div class="cell yd" style="left:24px"></div><div class="cell yd" style="left:32px"></div><div class="cell yd" style="left:40px"></div><div class="cell yd" style="left:48px"></div><div class="cell yd" style="left:56px"></div><div class="cell yd" style="left:64px"></div><div class="cell yd" style="left:72px"></div><div class="cell yd" style="left:80px"></div><div class="cell yd" style="left:88px"></div><div class="cell yd" style="left:96px"></div><div class="cell yd" style="left:104px"></div><div class="cell yd" style="left:112px"></div><div class="cell yd" style="left:120px"></div><div class="cell yd" style="left:128px"></div><div class="cell gd" style="left:136px"></div><div class="cell gd" style="left:144px"></div><div class="cell gd" style="left:152px"></div></div>
<div class="pv" style="left:1701.5px;top:76px;color:#e8485a">0<svg width="10" height="10.4" style="vertical-align:baseline;display:inline-block"><g fill="none" stroke="#e8485a" stroke-width="1.3"><circle cx="2.75" cy="3.25" r="1.4"/><circle cx="7.25" cy="8.15" r="1.4"/></g><path d="M2.4 9.3L7.6 2.3" stroke="#e8485a" stroke-width="1.25"/></svg></div>
<div class="a" style="left:1746px;top:77px;width:144px;height:21px"><div class="cell rl" style="left:0px"></div><div class="cell rd" style="left:8px"></div><div class="cell yd" style="left:16px"></div><div class="cell yd" style="left:24px"></div><div class="cell yd" style="left:32px"></div><div class="cell yd" style="left:40px"></div><div class="cell yd" style="left:48px"></div><div class="cell yd" style="left:56px"></div><div class="cell yd" style="left:64px"></div><div class="cell yd" style="left:72px"></div><div class="cell yd" style="left:80px"></div><div class="cell yd" style="left:88px"></div><div class="cell yd" style="left:96px"></div><div class="cell yd" style="left:104px"></div><div class="cell yd" style="left:112px"></div><div class="cell yd" style="left:120px"></div><div class="cell gd" style="left:128px"></div><div class="cell gd" style="left:136px"></div></div>
<div class="pv" style="left:1899.7px;top:76px;color:#e8485a">0<svg width="10" height="10.4" style="vertical-align:baseline;display:inline-block"><g fill="none" stroke="#e8485a" stroke-width="1.3"><circle cx="2.75" cy="3.25" r="1.4"/><circle cx="7.25" cy="8.15" r="1.4"/></g><path d="M2.4 9.3L7.6 2.3" stroke="#e8485a" stroke-width="1.25"/></svg></div>
<div class="hl" style="left:0;top:139px;width:1957px"></div>
<div class="td" style="left:217px;top:105px;width:217px">notebook</div>
<div class="td" style="left:435px;top:105px;width:216px">2023/04/23 08:38:00</div>
<div class="td" style="left:652px;top:105px;width:217px">4 hour</div>
<div class="a" style="left:876px;top:112px;width:160px;height:21px"><div class="cell rl" style="left:0px"></div><div class="cell rd" style="left:8px"></div><div class="cell yd" style="left:16px"></div><div class="cell yd" style="left:24px"></div><div class="cell yd" style="left:32px"></div><div class="cell yd" style="left:40px"></div><div class="cell yd" style="left:48px"></div><div class="cell yd" style="left:56px"></div><div class="cell yd" style="left:64px"></div><div class="cell yd" style="left:72px"></div><div class="cell yd" style="left:80px"></div><div class="cell yd" style="left:88px"></div><div class="cell yd" style="left:96px"></div><div class="cell yd" style="left:104px"></div><div class="cell yd" style="left:112px"></div><div class="cell yd" style="left:120px"></div><div class="cell yd" style="left:128px"></div><div class="cell gd" style="left:136px"></div><div class="cell gd" style="left:144px"></div><div class="cell gd" style="left:152px"></div></div>
<div class="pv" style="left:1049.5px;top:111px;color:#e8485a">0<svg width="10" height="10.4" style="vertical-align:baseline;display:inline-block"><g fill="none" stroke="#e8485a" stroke-width="1.3"><circle cx="2.75" cy="3.25" r="1.4"/><circle cx="7.25" cy="8.15" r="1.4"/></g><path d="M2.4 9.3L7.6 2.3" stroke="#e8485a" stroke-width="1.25"/></svg></div>
<div class="a" style="left:1093px;top:112px;width:160px;height:21px"><div class="cell rl" style="left:0px"></div><div class="cell rd" style="left:8px"></div><div class="cell yd" style="left:16px"></div><div class="cell yd" style="left:24px"></div><div class="cell yd" style="left:32px"></div><div class="cell yd" style="left:40px"></div><div class="cell yd" style="left:48px"></div><div class="cell yd" style="left:56px"></div><div class="cell yd" style="left:64px"></div><div class="cell yd" style="left:72px"></div><div class="cell yd" style="left:80px"></div><div class="cell yd" style="left:88px"></div><div class="cell yd" style="left:96px"></div><div class="cell yd" style="left:104px"></div><div class="cell yd" style="left:112px"></div><div class="cell yd" style="left:120px"></div><div class="cell yd" style="left:128px"></div><div class="cell gd" style="left:136px"></div><div class="cell gd" style="left:144px"></div><div class="cell gd" style="left:152px"></div></div>
<div class="pv" style="left:1266.5px;top:111px;color:#e8485a">0<svg width="10" height="10.4" style="vertical-align:baseline;display:inline-block"><g fill="none" stroke="#e8485a" stroke-width="1.3"><circle cx="2.75" cy="3.25" r="1.4"/><circle cx="7.25" cy="8.15" r="1.4"/></g><path d="M2.4 9.3L7.6 2.3" stroke="#e8485a" stroke-width="1.25"/></svg></div>
<div class="a" style="left:1528px;top:112px;width:160px;height:21px"><div class="cell rd" style="left:0px"></div><div class="cell rd" style="left:8px"></div><div class="cell yd" style="left:16px"></div><div class="cell yd" style="left:24px"></div><div class="cell yd" style="left:32px"></div><div class="cell yd" style="left:40px"></div><div class="cell yd" style="left:48px"></div><div class="cell yd" style="left:56px"></div><div class="cell yd" style="left:64px"></div><div class="cell yd" style="left:72px"></div><div class="cell yd" style="left:80px"></div><div class="cell yd" style="left:88px"></div><div class="cell yd" style="left:96px"></div><div class="cell yd" style="left:104px"></div><div class="cell yd" style="left:112px"></div><div class="cell yd" style="left:120px"></div><div class="cell yd" style="left:128px"></div><div class="cell gd" style="left:136px"></div><div class="cell gd" style="left:144px"></div><div class="cell gd" style="left:152px"></div></div>
<div class="a" style="left:1746px;top:112px;width:144px;height:21px"><div class="cell rd" style="left:0px"></div><div class="cell rd" style="left:8px"></div><div class="cell yd" style="left:16px"></div><div class="cell yd" style="left:24px"></div><div class="cell yd" style="left:32px"></div><div class="cell yd" style="left:40px"></div><div class="cell yd" style="left:48px"></div><div class="cell yd" style="left:56px"></div><div class="cell yd" style="left:64px"></div><div class="cell yd" style="left:72px"></div><div class="cell yd" style="left:80px"></div><div class="cell yd" style="left:88px"></div><div class="cell yd" style="left:96px"></div><div class="cell yd" style="left:104px"></div><div class="cell yd" style="left:112px"></div><div class="cell yd" style="left:120px"></div><div class="cell gd" style="left:128px"></div><div class="cell gd" style="left:136px"></div></div>
<div class="hl" style="left:0;top:174px;width:1957px"></div>
<div class="td" style="left:217px;top:140px;width:217px">notebook</div>
<div class="td" style="left:435px;top:140px;width:216px">2023/04/23 08:38:00</div>
<div class="td" style="left:652px;top:140px;width:217px"><svg width="8.06" height="10.38" style="vertical-align:baseline;display:inline-block"><path d="M5.70 0V10.38H3.73V2.59L1.14 3.42V1.76L5.28 0Z" fill="#ccccdc"/></svg> day</div>
<div class="a" style="left:876px;top:147px;width:160px;height:21px"><div class="cell rl" style="left:0px"></div><div class="cell rd" style="left:8px"></div><div class="cell yd" style="left:16px"></div><div class="cell yd" style="left:24px"></div><div class="cell yd" style="left:32px"></div><div class="cell yd" style="left:40px"></div><div class="cell yd" style="left:48px"></div><div class="cell yd" style="left:56px"></div><div class="cell yd" style="left:64px"></div><div class="cell yd" style="left:72px"></div><div class="cell yd" style="left:80px"></div><div class="cell yd" style="left:88px"></div><div class="cell yd" style="left:96px"></div><div class="cell yd" style="left:104px"></div><div class="cell yd" style="left:112px"></div><div class="cell yd" style="left:120px"></div><div class="cell yd" style="left:128px"></div><div class="cell gd" style="left:136px"></div><div class="cell gd" style="left:144px"></div><div class="cell gd" style="left:152px"></div></div>
<div class="pv" style="left:1049.5px;top:146px;color:#e8485a">0<svg width="10" height="10.4" style="vertical-align:baseline;display:inline-block"><g fill="none" stroke="#e8485a" stroke-width="1.3"><circle cx="2.75" cy="3.25" r="1.4"/><circle cx="7.25" cy="8.15" r="1.4"/></g><path d="M2.4 9.3L7.6 2.3" stroke="#e8485a" stroke-width="1.25"/></svg></div>
<div class="a" style="left:1093px;top:147px;width:160px;height:21px"><div class="cell rl" style="left:0px"></div><div class="cell rd" style="left:8px"></div><div class="cell yd" style="left:16px"></div><div class="cell yd" style="left:24px"></div><div class="cell yd" style="left:32px"></div><div class="cell yd" style="left:40px"></div><div class="cell yd" style="left:48px"></div><div class="cell yd" style="left:56px"></div><div class="cell yd" style="left:64px"></div><div class="cell yd" style="left:72px"></div><div class="cell yd" style="left:80px"></div><div class="cell yd" style="left:88px"></div><div class="cell yd" style="left:96px"></div><div class="cell yd" style="left:104px"></div><div class="cell yd" style="left:112px"></div><div class="cell yd" style="left:120px"></div><div class="cell yd" style="left:128px"></div><div class="cell gd" style="left:136px"></div><div class="cell gd" style="left:144px"></div><div class="cell gd" style="left:152px"></div></div>
<div class="pv" style="left:1266.5px;top:146px;color:#e8485a">0<svg width="10" height="10.4" style="vertical-align:baseline;display:inline-block"><g fill="none" stroke="#e8485a" stroke-width="1.3"><circle cx="2.75" cy="3.25" r="1.4"/><circle cx="7.25" cy="8.15" r="1.4"/></g><path d="M2.4 9.3L7.6 2.3" stroke="#e8485a" stroke-width="1.25"/></svg></div>
<div class="a" style="left:1528px;top:147px;width:160px;height:21px"><div class="cell rd" style="left:0px"></div><div class="cell rd" style="left:8px"></div><div class="cell yd" style="left:16px"></div><div class="cell yd" style="left:24px"></div><div class="cell yd" style="left:32px"></div><div class="cell yd" style="left:40px"></div><div class="cell yd" style="left:48px"></div><div class="cell yd" style="left:56px"></div><div class="cell yd" style="left:64px"></div><div class="cell yd" style="left:72px"></div><div class="cell yd" style="left:80px"></div><div class="cell yd" style="left:88px"></div><div class="cell yd" style="left:96px"></div><div class="cell yd" style="left:104px"></div><div class="cell yd" style="left:112px"></div><div class="cell yd" style="left:120px"></div><div class="cell yd" style="left:128px"></div><div class="cell gd" style="left:136px"></div><div class="cell gd" style="left:144px"></div><div class="cell gd" style="left:152px"></div></div>
<div class="a" style="left:1746px;top:147px;width:144px;height:21px"><div class="cell rd" style="left:0px"></div><div class="cell rd" style="left:8px"></div><div class="cell yd" style="left:16px"></div><div class="cell yd" style="left:24px"></div><div class="cell yd" style="left:32px"></div><div class="cell yd" style="left:40px"></div><div class="cell yd" style="left:48px"></div><div class="cell yd" style="left:56px"></div><div class="cell yd" style="left:64px"></div><div class="cell yd" style="left:72px"></div><div class="cell yd" style="left:80px"></div><div class="cell yd" style="left:88px"></div><div class="cell yd" style="left:96px"></div><div class="cell yd" style="left:104px"></div><div class="cell yd" style="left:112px"></div><div class="cell yd" style="left:120px"></div><div class="cell gd" style="left:128px"></div><div class="cell gd" style="left:136px"></div></div>
<div class="hl" style="left:0;top:209px;width:1957px"></div>
<div class="td" style="left:217px;top:175px;width:217px">notebook</div>
<div class="td" style="left:435px;top:175px;width:216px">2023/04/23 08:38:00</div>
<div class="td" style="left:652px;top:175px;width:217px"><svg width="8.06" height="10.38" style="vertical-align:baseline;display:inline-block"><path d="M5.70 0V10.38H3.73V2.59L1.14 3.42V1.76L5.28 0Z" fill="#ccccdc"/></svg> day</div>
<div class="td" style="left:1305px;top:175px;width:216px"><svg width="8.06" height="10.38" style="vertical-align:baseline;display:inline-block"><path d="M5.70 0V10.38H3.73V2.59L1.14 3.42V1.76L5.28 0Z" fill="#ccccdc"/></svg></div>
<div class="a" style="left:876px;top:182px;width:160px;height:21px"><div class="cell rl" style="left:0px"></div><div class="cell rd" style="left:8px"></div><div class="cell yd" style="left:16px"></div><div class="cell yd" style="left:24px"></div><div class="cell yd" style="left:32px"></div><div class="cell yd" style="left:40px"></div><div class="cell yd" style="left:48px"></div><div class="cell yd" style="left:56px"></div><div class="cell yd" style="left:64px"></div><div class="cell yd" style="left:72px"></div><div class="cell yd" style="left:80px"></div><div class="cell yd" style="left:88px"></div><div class="cell yd" style="left:96px"></div><div class="cell yd" style="left:104px"></div><div class="cell yd" style="left:112px"></div><div class="cell yd" style="left:120px"></div><div class="cell yd" style="left:128px"></div><div class="cell gd" style="left:136px"></div><div class="cell gd" style="left:144px"></div><div class="cell gd" style="left:152px"></div></div>
<div class="pv" style="left:1049.5px;top:181px;color:#e8485a"><svg width="7.78" height="10.02" style="vertical-align:baseline;display:inline-block"><path d="M5.50 0V10.02H3.60V2.50L1.10 3.30V1.70L5.10 0Z" fill="#e8485a"/></svg><svg width="10" height="10.4" style="vertical-align:baseline;display:inline-block"><g fill="none" stroke="#e8485a" stroke-width="1.3"><circle cx="2.75" cy="3.25" r="1.4"/><circle cx="7.25" cy="8.15" r="1.4"/></g><path d="M2.4 9.3L7.6 2.3" stroke="#e8485a" stroke-width="1.25"/></svg></div>
<div class="a" style="left:1093px;top:182px;width:152px;height:21px"><div class="cell rl" style="left:0px"></div><div class="cell rl" style="left:8px"></div><div class="cell yl" style="left:16px"></div><div class="cell yl" style="left:24px"></div><div class="cell yd" style="left:32px"></div><div class="cell yd" style="left:40px"></div><div class="cell yd" style="left:48px"></div><div class="cell yd" style="left:56px"></div><div class="cell yd" style="left:64px"></div><div class="cell yd" style="left:72px"></div><div class="cell yd" style="left:80px"></div><div class="cell yd" style="left:88px"></div><div class="cell yd" style="left:96px"></div><div class="cell yd" style="left:104px"></div><div class="cell yd" style="left:112px"></div><div class="cell yd" style="left:120px"></div><div class="cell yd" style="left:128px"></div><div class="cell gd" style="left:136px"></div><div class="cell gd" style="left:144px"></div></div>
<div class="pv" style="left:1255.0px;top:181px;color:#f0d82c;-webkit-text-stroke:0.35px #f0d82c">2<svg width="7.78" height="10.02" style="vertical-align:baseline;display:inline-block"><path d="M5.50 0V10.02H3.60V2.50L1.10 3.30V1.70L5.10 0Z" fill="#f0d82c"/></svg><svg width="10" height="10.4" style="vertical-align:baseline;display:inline-block"><g fill="none" stroke="#f0d82c" stroke-width="1.3"><circle cx="2.75" cy="3.25" r="1.4"/><circle cx="7.25" cy="8.15" r="1.4"/></g><path d="M2.4 9.3L7.6 2.3" stroke="#f0d82c" stroke-width="1.25"/></svg></div>
<div class="a" style="left:1528px;top:182px;width:160px;height:21px"><div class="cell rl" style="left:0px"></div><div class="cell rd" style="left:8px"></div><div class="cell yd" style="left:16px"></div><div class="cell yd" style="left:24px"></div><div class="cell yd" style="left:32px"></div><div class="cell yd" style="left:40px"></div><div class="cell yd" style="left:48px"></div><div class="cell yd" style="left:56px"></div><div class="cell yd" style="left:64px"></div><div class="cell yd" style="left:72px"></div><div class="cell yd" style="left:80px"></div><div class="cell yd" style="left:88px"></div><div class="cell yd" style="left:96px"></div><div class="cell yd" style="left:104px"></div><div class="cell yd" style="left:112px"></div><div class="cell yd" style="left:120px"></div><div class="cell yd" style="left:128px"></div><div class="cell gd" style="left:136px"></div><div class="cell gd" style="left:144px"></div><div class="cell gd" style="left:152px"></div></div>
<div class="pv" style="left:1701.5px;top:181px;color:#e8485a">0<svg width="10" height="10.4" style="vertical-align:baseline;display:inline-block"><g fill="none" stroke="#e8485a" stroke-width="1.3"><circle cx="2.75" cy="3.25" r="1.4"/><circle cx="7.25" cy="8.15" r="1.4"/></g><path d="M2.4 9.3L7.6 2.3" stroke="#e8485a" stroke-width="1.25"/></svg></div>
<div class="a" style="left:1746px;top:182px;width:144px;height:21px"><div class="cell rl" style="left:0px"></div><div class="cell rd" style="left:8px"></div><div class="cell yd" style="left:16px"></div><div class="cell yd" style="left:24px"></div><div class="cell yd" style="left:32px"></div><div class="cell yd" style="left:40px"></div><div class="cell yd" style="left:48px"></div><div class="cell yd" style="left:56px"></div><div class="cell yd" style="left:64px"></div><div class="cell yd" style="left:72px"></div><div class="cell yd" style="left:80px"></div><div class="cell yd" style="left:88px"></div><div class="cell yd" style="left:96px"></div><div class="cell yd" style="left:104px"></div><div class="cell yd" style="left:112px"></div><div class="cell yd" style="left:120px"></div><div class="cell gd" style="left:128px"></div><div class="cell gd" style="left:136px"></div></div>
<div class="pv" style="left:1899.7px;top:181px;color:#e8485a">0<svg width="10" height="10.4" style="vertical-align:baseline;display:inline-block"><g fill="none" stroke="#e8485a" stroke-width="1.3"><circle cx="2.75" cy="3.25" r="1.4"/><circle cx="7.25" cy="8.15" r="1.4"/></g><path d="M2.4 9.3L7.6 2.3" stroke="#e8485a" stroke-width="1.25"/></svg></div>
<div class="hl" style="left:0;top:244px;width:1957px"></div>
<div class="td" style="left:217px;top:210px;width:217px">notebook</div>
<div class="td" style="left:435px;top:210px;width:216px">2023/04/23 08:38:00</div>
<div class="td" style="left:652px;top:210px;width:217px"><svg width="8.06" height="10.38" style="vertical-align:baseline;display:inline-block"><path d="M5.70 0V10.38H3.73V2.59L1.14 3.42V1.76L5.28 0Z" fill="#ccccdc"/></svg> day</div>
<div class="td" style="left:1305px;top:210px;width:216px"><svg width="8.06" height="10.38" style="vertical-align:baseline;display:inline-block"><path d="M5.70 0V10.38H3.73V2.59L1.14 3.42V1.76L5.28 0Z" fill="#ccccdc"/></svg></div>
<div class="a" style="left:876px;top:217px;width:160px;height:21px"><div class="cell rl" style="left:0px"></div><div class="cell rd" style="left:8px"></div><div class="cell yd" style="left:16px"></div><div class="cell yd" style="left:24px"></div><div class="cell yd" style="left:32px"></div><div class="cell yd" style="left:40px"></div><div class="cell yd" style="left:48px"></div><div class="cell yd" style="left:56px"></div><div class="cell yd" style="left:64px"></div><div class="cell yd" style="left:72px"></div><div class="cell yd" style="left:80px"></div><div class="cell yd" style="left:88px"></div><div class="cell yd" style="left:96px"></div><div class="cell yd" style="left:104px"></div><div class="cell yd" style="left:112px"></div><div class="cell yd" style="left:120px"></div><div class="cell yd" style="left:128px"></div><div class="cell gd" style="left:136px"></div><div class="cell gd" style="left:144px"></div><div class="cell gd" style="left:152px"></div></div>
<div class="pv" style="left:1049.5px;top:216px;color:#e8485a"><svg width="7.78" height="10.02" style="vertical-align:baseline;display:inline-block"><path d="M5.50 0V10.02H3.60V2.50L1.10 3.30V1.70L5.10 0Z" fill="#e8485a"/></svg><svg width="10" height="10.4" style="vertical-align:baseline;display:inline-block"><g fill="none" stroke="#e8485a" stroke-width="1.3"><circle cx="2.75" cy="3.25" r="1.4"/><circle cx="7.25" cy="8.15" r="1.4"/></g><path d="M2.4 9.3L7.6 2.3" stroke="#e8485a" stroke-width="1.25"/></svg></div>
<div class="a" style="left:1093px;top:217px;width:160px;height:21px"><div class="cell rl" style="left:0px"></div><div class="cell rd" style="left:8px"></div><div class="cell yd" style="left:16px"></div><div class="cell yd" style="left:24px"></div><div class="cell yd" style="left:32px"></div><div class="cell yd" style="left:40px"></div><div class="cell yd" style="left:48px"></div><div class="cell yd" style="left:56px"></div><div class="cell yd" style="left:64px"></div><div class="cell yd" style="left:72px"></div><div class="cell yd" style="left:80px"></div><div class="cell yd" style="left:88px"></div><div class="cell yd" style="left:96px"></div><div class="cell yd" style="left:104px"></div><div class="cell yd" style="left:112px"></div><div class="cell yd" style="left:120px"></div><div class="cell yd" style="left:128px"></div><div class="cell gd" style="left:136px"></div><div class="cell gd" style="left:144px"></div><div class="cell gd" style="left:152px"></div></div>
<div class="pv" style="left:1266.5px;top:216px;color:#e8485a">0<svg width="10" height="10.4" style="vertical-align:baseline;display:inline-block"><g fill="none" stroke="#e8485a" stroke-width="1.3"><circle cx="2.75" cy="3.25" r="1.4"/><circle cx="7.25" cy="8.15" r="1.4"/></g><path d="M2.4 9.3L7.6 2.3" stroke="#e8485a" stroke-width="1.25"/></svg></div>
<div class="a" style="left:1528px;top:217px;width:160px;height:21px"><div class="cell rl" style="left:0px"></div><div class="cell rd" style="left:8px"></div><div class="cell yd" style="left:16px"></div><div class="cell yd" style="left:24px"></div><div class="cell yd" style="left:32px"></div><div class="cell yd" style="left:40px"></div><div class="cell yd" style="left:48px"></div><div class="cell yd" style="left:56px"></div><div class="cell yd" style="left:64px"></div><div class="cell yd" style="left:72px"></div><div class="cell yd" style="left:80px"></div><div class="cell yd" style="left:88px"></div><div class="cell yd" style="left:96px"></div><div class="cell yd" style="left:104px"></div><div class="cell yd" style="left:112px"></div><div class="cell yd" style="left:120px"></div><div class="cell yd" style="left:128px"></div><div class="cell gd" style="left:136px"></div><div class="cell gd" style="left:144px"></div><div class="cell gd" style="left:152px"></div></div>
<div class="pv" style="left:1701.5px;top:216px;color:#e8485a">0<svg width="10" height="10.4" style="vertical-align:baseline;display:inline-block"><g fill="none" stroke="#e8485a" stroke-width="1.3"><circle cx="2.75" cy="3.25" r="1.4"/><circle cx="7.25" cy="8.15" r="1.4"/></g><path d="M2.4 9.3L7.6 2.3" stroke="#e8485a" stroke-width="1.25"/></svg></div>
<div class="a" style="left:1746px;top:217px;width:144px;height:21px"><div class="cell rl" style="left:0px"></div><div class="cell rd" style="left:8px"></div><div class="cell yd" style="left:16px"></div><div class="cell yd" style="left:24px"></div><div class="cell yd" style="left:32px"></div><div class="cell yd" style="left:40px"></div><div class="cell yd" style="left:48px"></div><div class="cell yd" style="left:56px"></div><div class="cell yd" style="left:64px"></div><div class="cell yd" style="left:72px"></div><div class="cell yd" style="left:80px"></div><div class="cell yd" style="left:88px"></div><div class="cell yd" style="left:96px"></div><div class="cell yd" style="left:104px"></div><div class="cell yd" style="left:112px"></div><div class="cell yd" style="left:120px"></div><div class="cell gd" style="left:128px"></div><div class="cell gd" style="left:136px"></div></div>
<div class="pv" style="left:1899.7px;top:216px;color:#e8485a">0<svg width="10" height="10.4" style="vertical-align:baseline;display:inline-block"><g fill="none" stroke="#e8485a" stroke-width="1.3"><circle cx="2.75" cy="3.25" r="1.4"/><circle cx="7.25" cy="8.15" r="1.4"/></g><path d="M2.4 9.3L7.6 2.3" stroke="#e8485a" stroke-width="1.25"/></svg></div>
</div>
<div class="chk" style="left:8px;top:351px;width:198px;height:226px;background-position:5px 0px"></div>
<div class="a" style="left:1956px;top:314px;width:8px;height:106px;border-radius:4px;background:#383b41"></div>
<div class="panel" style="left:6px;top:583px;width:1959px;height:334px">
<div class="corner"></div><svg class="ci" width="7" height="10.5" viewBox="0 0 8 12"><rect x="2.3" y="0.5" width="3.2" height="3" rx="0.6" fill="#c4c4cc"/><path d="M0.8 4.8h4.6v5.2h1.6v1.7H0.8V10h1.6V6.5H0.8z" fill="#c4c4cc"/></svg>
<div class="ptitle" style="left:0;right:0">最近7天任务概要</div>
</div>
<div class="a" style="right:16px;top:593px;font-size:12px;font-weight:700;letter-spacing:-0.2px;color:#33a2e5;line-height:15px;white-space:nowrap"><svg style="display:inline-block;vertical-align:middle;margin-right:4px;margin-top:-1px" width="12" height="12" viewBox="0 0 12 12"><g fill="none" stroke="#33a2e5" stroke-width="1.2"><circle cx="6" cy="6" r="5.3"/><path d="M6 3v3.2H4"/></g></svg>Last 7 days</div>
<div class="th" style="left:7px;top:616px;width:1957px"></div>
<div class="hd" style="left:7px;top:616px;width:216px">任务ID<svg style="display:inline-block;vertical-align:middle;margin-left:5px;margin-top:-3px;position:relative;top:0.8px;left:-0.5px" width="14" height="14" viewBox="0 0 14 14"><g fill="none" stroke="#9a9ba4" stroke-width="1.25" stroke-linejoin="round"><path d="M2.6 0.9H11.4A1.7 1.7 0 0 1 12.7 3.7L8.7 8.1V12.2L5.6 13.5V8.1L1.3 3.7A1.7 1.7 0 0 1 2.6 0.9Z"/><path d="M2.2 3.3H11.8"/></g></svg></div>
<div class="hd" style="left:224px;top:616px;width:217px">类型<svg style="display:inline-block;vertical-align:middle;margin-left:5px;margin-top:-3px;position:relative;top:0.8px;left:-0.5px" width="14" height="14" viewBox="0 0 14 14"><g fill="none" stroke="#9a9ba4" stroke-width="1.25" stroke-linejoin="round"><path d="M2.6 0.9H11.4A1.7 1.7 0 0 1 12.7 3.7L8.7 8.1V12.2L5.6 13.5V8.1L1.3 3.7A1.7 1.7 0 0 1 2.6 0.9Z"/><path d="M2.2 3.3H11.8"/></g></svg></div>
<div class="hd" style="left:442px;top:616px;width:216px">开始时间<svg style="display:inline-block;vertical-align:middle;margin-left:5px;margin-top:-3px;position:relative;top:0.8px;left:-0.5px" width="14" height="14" viewBox="0 0 14 14"><g fill="none" stroke="#9a9ba4" stroke-width="1.25" stroke-linejoin="round"><path d="M2.6 0.9H11.4A1.7 1.7 0 0 1 12.7 3.7L8.7 8.1V12.2L5.6 13.5V8.1L1.3 3.7A1.7 1.7 0 0 1 2.6 0.9Z"/><path d="M2.2 3.3H11.8"/></g></svg></div>
<div class="hd" style="left:659px;top:616px;width:217px">运行时长<svg style="display:inline-block;vertical-align:middle;margin-left:5px;margin-top:-3px;position:relative;top:0.8px;left:-0.5px" width="14" height="14" viewBox="0 0 14 14"><g fill="none" stroke="#9a9ba4" stroke-width="1.25" stroke-linejoin="round"><path d="M2.6 0.9H11.4A1.7 1.7 0 0 1 12.7 3.7L8.7 8.1V12.2L5.6 13.5V8.1L1.3 3.7A1.7 1.7 0 0 1 2.6 0.9Z"/><path d="M2.2 3.3H11.8"/></g></svg></div>
<div class="hd" style="left:877px;top:616px;width:216px">CPU平均利用率<svg style="display:inline-block;vertical-align:middle;margin-left:5px;margin-top:-3px;position:relative;top:0.8px;left:-0.5px" width="14" height="14" viewBox="0 0 14 14"><g fill="none" stroke="#9a9ba4" stroke-width="1.25" stroke-linejoin="round"><path d="M2.6 0.9H11.4A1.7 1.7 0 0 1 12.7 3.7L8.7 8.1V12.2L5.6 13.5V8.1L1.3 3.7A1.7 1.7 0 0 1 2.6 0.9Z"/><path d="M2.2 3.3H11.8"/></g></svg></div>
<div class="hd" style="left:1094px;top:616px;width:217px">内存平均利用率<svg style="display:inline-block;vertical-align:middle;margin-left:5px;margin-top:-3px;position:relative;top:0.8px;left:-0.5px" width="14" height="14" viewBox="0 0 14 14"><g fill="none" stroke="#9a9ba4" stroke-width="1.25" stroke-linejoin="round"><path d="M2.6 0.9H11.4A1.7 1.7 0 0 1 12.7 3.7L8.7 8.1V12.2L5.6 13.5V8.1L1.3 3.7A1.7 1.7 0 0 1 2.6 0.9Z"/><path d="M2.2 3.3H11.8"/></g></svg></div>
<div class="hd" style="left:1312px;top:616px;width:216px">GPU占用卡数<svg style="display:inline-block;vertical-align:middle;margin-left:5px;margin-top:-3px;position:relative;top:0.8px;left:-0.5px" width="14" height="14" viewBox="0 0 14 14"><g fill="none" stroke="#9a9ba4" stroke-width="1.25" stroke-linejoin="round"><path d="M2.6 0.9H11.4A1.7 1.7 0 0 1 12.7 3.7L8.7 8.1V12.2L5.6 13.5V8.1L1.3 3.7A1.7 1.7 0 0 1 2.6 0.9Z"/><path d="M2.2 3.3H11.8"/></g></svg></div>
<div class="hd" style="left:1529px;top:616px;width:217px">GPU平均利用率<svg style="display:inline-block;vertical-align:middle;margin-left:5px;margin-top:-3px;position:relative;top:0.8px;left:-0.5px" width="14" height="14" viewBox="0 0 14 14"><g fill="none" stroke="#9a9ba4" stroke-width="1.25" stroke-linejoin="round"><path d="M2.6 0.9H11.4A1.7 1.7 0 0 1 12.7 3.7L8.7 8.1V12.2L5.6 13.5V8.1L1.3 3.7A1.7 1.7 0 0 1 2.6 0.9Z"/><path d="M2.2 3.3H11.8"/></g></svg></div>
<div class="hd" style="left:1747px;top:616px;width:217px">显存平均利用率<svg style="display:inline-block;vertical-align:middle;margin-left:5px;margin-top:-3px;position:relative;top:0.8px;left:-0.5px" width="14" height="14" viewBox="0 0 14 14"><g fill="none" stroke="#9a9ba4" stroke-width="1.25" stroke-linejoin="round"><path d="M2.6 0.9H11.4A1.7 1.7 0 0 1 12.7 3.7L8.7 8.1V12.2L5.6 13.5V8.1L1.3 3.7A1.7 1.7 0 0 1 2.6 0.9Z"/><path d="M2.2 3.3H11.8"/></g></svg></div>
<div class="vl" style="left:223px;top:616px;height:300px"></div>
<div class="vl" style="left:441px;top:616px;height:300px"></div>
<div class="vl" style="left:658px;top:616px;height:300px"></div>
<div class="vl" style="left:876px;top:616px;height:300px"></div>
<div class="vl" style="left:1093px;top:616px;height:300px"></div>
<div class="vl" style="left:1311px;top:616px;height:300px"></div>
<div class="vl" style="left:1528px;top:616px;height:300px"></div>
<div class="vl" style="left:1746px;top:616px;height:300px"></div>
<div class="a" style="left:7px;top:649px;width:1957px;height:267px;overflow:hidden">
<div class="hl" style="left:0;top:34px;width:1957px"></div>
<div class="td" style="left:217px;top:0px;width:217px">notebook</div>
<div class="td" style="left:435px;top:0px;width:216px">2023/04/23 <svg width="8.06" height="10.38" style="vertical-align:baseline;display:inline-block"><path d="M5.70 0V10.38H3.73V2.59L1.14 3.42V1.76L5.28 0Z" fill="#ccccdc"/></svg>0:50:00</div>
<div class="td" style="left:652px;top:0px;width:217px">22 hour</div>
<div class="td" style="left:1305px;top:0px;width:216px"><svg width="8.06" height="10.38" style="vertical-align:baseline;display:inline-block"><path d="M5.70 0V10.38H3.73V2.59L1.14 3.42V1.76L5.28 0Z" fill="#ccccdc"/></svg></div>
<div class="a" style="left:876px;top:7px;width:160px;height:21px"><div class="cell rl" style="left:0px"></div><div class="cell rd" style="left:8px"></div><div class="cell yd" style="left:16px"></div><div class="cell yd" style="left:24px"></div><div class="cell yd" style="left:32px"></div><div class="cell yd" style="left:40px"></div><div class="cell yd" style="left:48px"></div><div class="cell yd" style="left:56px"></div><div class="cell yd" style="left:64px"></div><div class="cell yd" style="left:72px"></div><div class="cell yd" style="left:80px"></div><div class="cell yd" style="left:88px"></div><div class="cell yd" style="left:96px"></div><div class="cell yd" style="left:104px"></div><div class="cell yd" style="left:112px"></div><div class="cell yd" style="left:120px"></div><div class="cell yd" style="left:128px"></div><div class="cell gd" style="left:136px"></div><div class="cell gd" style="left:144px"></div><div class="cell gd" style="left:152px"></div></div>
<div class="pv" style="left:1049.5px;top:6px;color:#e8485a"><svg width="7.78" height="10.02" style="vertical-align:baseline;display:inline-block"><path d="M5.50 0V10.02H3.60V2.50L1.10 3.30V1.70L5.10 0Z" fill="#e8485a"/></svg><svg width="10" height="10.4" style="vertical-align:baseline;display:inline-block"><g fill="none" stroke="#e8485a" stroke-width="1.3"><circle cx="2.75" cy="3.25" r="1.4"/><circle cx="7.25" cy="8.15" r="1.4"/></g><path d="M2.4 9.3L7.6 2.3" stroke="#e8485a" stroke-width="1.25"/></svg></div>
<div class="a" style="left:1093px;top:7px;width:160px;height:21px"><div class="cell rl" style="left:0px"></div><div class="cell rd" style="left:8px"></div><div class="cell yd" style="left:16px"></div><div class="cell yd" style="left:24px"></div><div class="cell yd" style="left:32px"></div><div class="cell yd" style="left:40px"></div><div class="cell yd" style="left:48px"></div><div class="cell yd" style="left:56px"></div><div class="cell yd" style="left:64px"></div><div class="cell yd" style="left:72px"></div><div class="cell yd" style="left:80px"></div><div class="cell yd" style="left:88px"></div><div class="cell yd" style="left:96px"></div><div class="cell yd" style="left:104px"></div><div class="cell yd" style="left:112px"></div><div class="cell yd" style="left:120px"></div><div class="cell yd" style="left:128px"></div><div class="cell gd" style="left:136px"></div><div class="cell gd" style="left:144px"></div><div class="cell gd" style="left:152px"></div></div>
<div class="pv" style="left:1266.5px;top:6px;color:#e8485a">0<svg width="10" height="10.4" style="vertical-align:baseline;display:inline-block"><g fill="none" stroke="#e8485a" stroke-width="1.3"><circle cx="2.75" cy="3.25" r="1.4"/><circle cx="7.25" cy="8.15" r="1.4"/></g><path d="M2.4 9.3L7.6 2.3" stroke="#e8485a" stroke-width="1.25"/></svg></div>
<div class="a" style="left:1528px;top:7px;width:160px;height:21px"><div class="cell rl" style="left:0px"></div><div class="cell rd" style="left:8px"></div><div class="cell yd" style="left:16px"></div><div class="cell yd" style="left:24px"></div><div class="cell yd" style="left:32px"></div><div class="cell yd" style="left:40px"></div><div class="cell yd" style="left:48px"></div><div class="cell yd" style="left:56px"></div><div class="cell yd" style="left:64px"></div><div class="cell yd" style="left:72px"></div><div class="cell yd" style="left:80px"></div><div class="cell yd" style="left:88px"></div><div class="cell yd" style="left:96px"></div><div class="cell yd" style="left:104px"></div><div class="cell yd" style="left:112px"></div><div class="cell yd" style="left:120px"></div><div class="cell yd" style="left:128px"></div><div class="cell gd" style="left:136px"></div><div class="cell gd" style="left:144px"></div><div class="cell gd" style="left:152px"></div></div>
<div class="pv" style="left:1701.5px;top:6px;color:#e8485a">0<svg width="10" height="10.4" style="vertical-align:baseline;display:inline-block"><g fill="none" stroke="#e8485a" stroke-width="1.3"><circle cx="2.75" cy="3.25" r="1.4"/><circle cx="7.25" cy="8.15" r="1.4"/></g><path d="M2.4 9.3L7.6 2.3" stroke="#e8485a" stroke-width="1.25"/></svg></div>
<div class="a" style="left:1746px;top:7px;width:144px;height:21px"><div class="cell rl" style="left:0px"></div><div class="cell rd" style="left:8px"></div><div class="cell yd" style="left:16px"></div><div class="cell yd" style="left:24px"></div><div class="cell yd" style="left:32px"></div><div class="cell yd" style="left:40px"></div><div class="cell yd" style="left:48px"></div><div class="cell yd" style="left:56px"></div><div class="cell yd" style="left:64px"></div><div class="cell yd" style="left:72px"></div><div class="cell yd" style="left:80px"></div><div class="cell yd" style="left:88px"></div><div class="cell yd" style="left:96px"></div><div class="cell yd" style="left:104px"></div><div class="cell yd" style="left:112px"></div><div class="cell yd" style="left:120px"></div><div class="cell gd" style="left:128px"></div><div class="cell gd" style="left:136px"></div></div>
<div class="pv" style="left:1899.7px;top:6px;color:#e8485a">0<svg width="10" height="10.4" style="vertical-align:baseline;display:inline-block"><g fill="none" stroke="#e8485a" stroke-width="1.3"><circle cx="2.75" cy="3.25" r="1.4"/><circle cx="7.25" cy="8.15" r="1.4"/></g><path d="M2.4 9.3L7.6 2.3" stroke="#e8485a" stroke-width="1.25"/></svg></div>
<div class="hl" style="left:0;top:69px;width:1957px"></div>
<div class="td" style="left:217px;top:35px;width:217px">notebook</div>
<div class="td" style="left:435px;top:35px;width:216px">2023/04/22 2<svg width="8.06" height="10.38" style="vertical-align:baseline;display:inline-block"><path d="M5.70 0V10.38H3.73V2.59L1.14 3.42V1.76L5.28 0Z" fill="#ccccdc"/></svg>:40:00</div>
<div class="td" style="left:652px;top:35px;width:217px"><svg width="8.06" height="10.38" style="vertical-align:baseline;display:inline-block"><path d="M5.70 0V10.38H3.73V2.59L1.14 3.42V1.76L5.28 0Z" fill="#ccccdc"/></svg> day</div>
<div class="td" style="left:1305px;top:35px;width:216px"><svg width="8.06" height="10.38" style="vertical-align:baseline;display:inline-block"><path d="M5.70 0V10.38H3.73V2.59L1.14 3.42V1.76L5.28 0Z" fill="#ccccdc"/></svg></div>
<div class="a" style="left:876px;top:42px;width:160px;height:21px"><div class="cell rl" style="left:0px"></div><div class="cell rd" style="left:8px"></div><div class="cell yd" style="left:16px"></div><div class="cell yd" style="left:24px"></div><div class="cell yd" style="left:32px"></div><div class="cell yd" style="left:40px"></div><div class="cell yd" style="left:48px"></div><div class="cell yd" style="left:56px"></div><div class="cell yd" style="left:64px"></div><div class="cell yd" style="left:72px"></div><div class="cell yd" style="left:80px"></div><div class="cell yd" style="left:88px"></div><div class="cell yd" style="left:96px"></div><div class="cell yd" style="left:104px"></div><div class="cell yd" style="left:112px"></div><div class="cell yd" style="left:120px"></div><div class="cell yd" style="left:128px"></div><div class="cell gd" style="left:136px"></div><div class="cell gd" style="left:144px"></div><div class="cell gd" style="left:152px"></div></div>
<div class="pv" style="left:1049.5px;top:41px;color:#e8485a"><svg width="7.78" height="10.02" style="vertical-align:baseline;display:inline-block"><path d="M5.50 0V10.02H3.60V2.50L1.10 3.30V1.70L5.10 0Z" fill="#e8485a"/></svg><svg width="10" height="10.4" style="vertical-align:baseline;display:inline-block"><g fill="none" stroke="#e8485a" stroke-width="1.3"><circle cx="2.75" cy="3.25" r="1.4"/><circle cx="7.25" cy="8.15" r="1.4"/></g><path d="M2.4 9.3L7.6 2.3" stroke="#e8485a" stroke-width="1.25"/></svg></div>
<div class="a" style="left:1093px;top:42px;width:160px;height:21px"><div class="cell rl" style="left:0px"></div><div class="cell rd" style="left:8px"></div><div class="cell yd" style="left:16px"></div><div class="cell yd" style="left:24px"></div><div class="cell yd" style="left:32px"></div><div class="cell yd" style="left:40px"></div><div class="cell yd" style="left:48px"></div><div class="cell yd" style="left:56px"></div><div class="cell yd" style="left:64px"></div><div class="cell yd" style="left:72px"></div><div class="cell yd" style="left:80px"></div><div class="cell yd" style="left:88px"></div><div class="cell yd" style="left:96px"></div><div class="cell yd" style="left:104px"></div><div class="cell yd" style="left:112px"></div><div class="cell yd" style="left:120px"></div><div class="cell yd" style="left:128px"></div><div class="cell gd" style="left:136px"></div><div class="cell gd" style="left:144px"></div><div class="cell gd" style="left:152px"></div></div>
<div class="pv" style="left:1266.5px;top:41px;color:#e8485a">0<svg width="10" height="10.4" style="vertical-align:baseline;display:inline-block"><g fill="none" stroke="#e8485a" stroke-width="1.3"><circle cx="2.75" cy="3.25" r="1.4"/><circle cx="7.25" cy="8.15" r="1.4"/></g><path d="M2.4 9.3L7.6 2.3" stroke="#e8485a" stroke-width="1.25"/></svg></div>
<div class="a" style="left:1528px;top:42px;width:160px;height:21px"><div class="cell rl" style="left:0px"></div><div class="cell rd" style="left:8px"></div><div class="cell yd" style="left:16px"></div><div class="cell yd" style="left:24px"></div><div class="cell yd" style="left:32px"></div><div class="cell yd" style="left:40px"></div><div class="cell yd" style="left:48px"></div><div class="cell yd" style="left:56px"></div><div class="cell yd" style="left:64px"></div><div class="cell yd" style="left:72px"></div><div class="cell yd" style="left:80px"></div><div class="cell yd" style="left:88px"></div><div class="cell yd" style="left:96px"></div><div class="cell yd" style="left:104px"></div><div class="cell yd" style="left:112px"></div><div class="cell yd" style="left:120px"></div><div class="cell yd" style="left:128px"></div><div class="cell gd" style="left:136px"></div><div class="cell gd" style="left:144px"></div><div class="cell gd" style="left:152px"></div></div>
<div class="pv" style="left:1701.5px;top:41px;color:#e8485a">0<svg width="10" height="10.4" style="vertical-align:baseline;display:inline-block"><g fill="none" stroke="#e8485a" stroke-width="1.3"><circle cx="2.75" cy="3.25" r="1.4"/><circle cx="7.25" cy="8.15" r="1.4"/></g><path d="M2.4 9.3L7.6 2.3" stroke="#e8485a" stroke-width="1.25"/></svg></div>
<div class="a" style="left:1746px;top:42px;width:144px;height:21px"><div class="cell rl" style="left:0px"></div><div class="cell rd" style="left:8px"></div><div class="cell yd" style="left:16px"></div><div class="cell yd" style="left:24px"></div><div class="cell yd" style="left:32px"></div><div class="cell yd" style="left:40px"></div><div class="cell yd" style="left:48px"></div><div class="cell yd" style="left:56px"></div><div class="cell yd" style="left:64px"></div><div class="cell yd" style="left:72px"></div><div class="cell yd" style="left:80px"></div><div class="cell yd" style="left:88px"></div><div class="cell yd" style="left:96px"></div><div class="cell yd" style="left:104px"></div><div class="cell yd" style="left:112px"></div><div class="cell yd" style="left:120px"></div><div class="cell gd" style="left:128px"></div><div class="cell gd" style="left:136px"></div></div>
<div class="pv" style="left:1899.7px;top:41px;color:#e8485a">0<svg width="10" height="10.4" style="vertical-align:baseline;display:inline-block"><g fill="none" stroke="#e8485a" stroke-width="1.3"><circle cx="2.75" cy="3.25" r="1.4"/><circle cx="7.25" cy="8.15" r="1.4"/></g><path d="M2.4 9.3L7.6 2.3" stroke="#e8485a" stroke-width="1.25"/></svg></div>
<div class="hl" style="left:0;top:104px;width:1957px"></div>
<div class="td" style="left:217px;top:70px;width:217px">notebook</div>
<div class="td" style="left:435px;top:70px;width:216px">2023/04/2<svg width="8.06" height="10.38" style="vertical-align:baseline;display:inline-block"><path d="M5.70 0V10.38H3.73V2.59L1.14 3.42V1.76L5.28 0Z" fill="#ccccdc"/></svg> <svg width="8.06" height="10.38" style="vertical-align:baseline;display:inline-block"><path d="M5.70 0V10.38H3.73V2.59L1.14 3.42V1.76L5.28 0Z" fill="#ccccdc"/></svg>6:50:00</div>
<div class="td" style="left:652px;top:70px;width:217px"><svg width="8.06" height="10.38" style="vertical-align:baseline;display:inline-block"><path d="M5.70 0V10.38H3.73V2.59L1.14 3.42V1.76L5.28 0Z" fill="#ccccdc"/></svg> day</div>
<div class="a" style="left:876px;top:77px;width:160px;height:21px"><div class="cell rl" style="left:0px"></div><div class="cell rd" style="left:8px"></div><div class="cell yd" style="left:16px"></div><div class="cell yd" style="left:24px"></div><div class="cell yd" style="left:32px"></div><div class="cell yd" style="left:40px"></div><div class="cell yd" style="left:48px"></div><div class="cell yd" style="left:56px"></div><div class="cell yd" style="left:64px"></div><div class="cell yd" style="left:72px"></div><div class="cell yd" style="left:80px"></div><div class="cell yd" style="left:88px"></div><div class="cell yd" style="left:96px"></div><div class="cell yd" style="left:104px"></div><div class="cell yd" style="left:112px"></div><div class="cell yd" style="left:120px"></div><div class="cell yd" style="left:128px"></div><div class="cell gd" style="left:136px"></div><div class="cell gd" style="left:144px"></div><div class="cell gd" style="left:152px"></div></div>
<div class="pv" style="left:1049.5px;top:76px;color:#e8485a">0<svg width="10" height="10.4" style="vertical-align:baseline;display:inline-block"><g fill="none" stroke="#e8485a" stroke-width="1.3"><circle cx="2.75" cy="3.25" r="1.4"/><circle cx="7.25" cy="8.15" r="1.4"/></g><path d="M2.4 9.3L7.6 2.3" stroke="#e8485a" stroke-width="1.25"/></svg></div>
<div class="a" style="left:1093px;top:77px;width:160px;height:21px"><div class="cell rl" style="left:0px"></div><div class="cell rd" style="left:8px"></div><div class="cell yd" style="left:16px"></div><div class="cell yd" style="left:24px"></div><div class="cell yd" style="left:32px"></div><div class="cell yd" style="left:40px"></div><div class="cell yd" style="left:48px"></div><div class="cell yd" style="left:56px"></div><div class="cell yd" style="left:64px"></div><div class="cell yd" style="left:72px"></div><div class="cell yd" style="left:80px"></div><div class="cell yd" style="left:88px"></div><div class="cell yd" style="left:96px"></div><div class="cell yd" style="left:104px"></div><div class="cell yd" style="left:112px"></div><div class="cell yd" style="left:120px"></div><div class="cell yd" style="left:128px"></div><div class="cell gd" style="left:136px"></div><div class="cell gd" style="left:144px"></div><div class="cell gd" style="left:152px"></div></div>
<div class="pv" style="left:1266.5px;top:76px;color:#e8485a"><svg width="7.78" height="10.02" style="vertical-align:baseline;display:inline-block"><path d="M5.50 0V10.02H3.60V2.50L1.10 3.30V1.70L5.10 0Z" fill="#e8485a"/></svg><svg width="10" height="10.4" style="vertical-align:baseline;display:inline-block"><g fill="none" stroke="#e8485a" stroke-width="1.3"><circle cx="2.75" cy="3.25" r="1.4"/><circle cx="7.25" cy="8.15" r="1.4"/></g><path d="M2.4 9.3L7.6 2.3" stroke="#e8485a" stroke-width="1.25"/></svg></div>
<div class="a" style="left:1528px;top:77px;width:160px;height:21px"><div class="cell rd" style="left:0px"></div><div class="cell rd" style="left:8px"></div><div class="cell yd" style="left:16px"></div><div class="cell yd" style="left:24px"></div><div class="cell yd" style="left:32px"></div><div class="cell yd" style="left:40px"></div><div class="cell yd" style="left:48px"></div><div class="cell yd" style="left:56px"></div><div class="cell yd" style="left:64px"></div><div class="cell yd" style="left:72px"></div><div class="cell yd" style="left:80px"></div><div class="cell yd" style="left:88px"></div><div class="cell yd" style="left:96px"></div><div class="cell yd" style="left:104px"></div><div class="cell yd" style="left:112px"></div><div class="cell yd" style="left:120px"></div><div class="cell yd" style="left:128px"></div><div class="cell gd" style="left:136px"></div><div class="cell gd" style="left:144px"></div><div class="cell gd" style="left:152px"></div></div>
<div class="a" style="left:1746px;top:77px;width:144px;height:21px"><div class="cell rd" style="left:0px"></div><div class="cell rd" style="left:8px"></div><div class="cell yd" style="left:16px"></div><div class="cell yd" style="left:24px"></div><div class="cell yd" style="left:32px"></div><div class="cell yd" style="left:40px"></div><div class="cell yd" style="left:48px"></div><div class="cell yd" style="left:56px"></div><div class="cell yd" style="left:64px"></div><div class="cell yd" style="left:72px"></div><div class="cell yd" style="left:80px"></div><div class="cell yd" style="left:88px"></div><div class="cell yd" style="left:96px"></div><div class="cell yd" style="left:104px"></div><div class="cell yd" style="left:112px"></div><div class="cell yd" style="left:120px"></div><div class="cell gd" style="left:128px"></div><div class="cell gd" style="left:136px"></div></div>
<div class="hl" style="left:0;top:139px;width:1957px"></div>
<div class="td" style="left:217px;top:105px;width:217px">notebook</div>
<div class="td" style="left:435px;top:105px;width:216px">2023/04/20 22:20:00</div>
<div class="td" style="left:652px;top:105px;width:217px"><svg width="8.06" height="10.38" style="vertical-align:baseline;display:inline-block"><path d="M5.70 0V10.38H3.73V2.59L1.14 3.42V1.76L5.28 0Z" fill="#ccccdc"/></svg>9 hour</div>
<div class="a" style="left:876px;top:112px;width:160px;height:21px"><div class="cell rl" style="left:0px"></div><div class="cell rd" style="left:8px"></div><div class="cell yd" style="left:16px"></div><div class="cell yd" style="left:24px"></div><div class="cell yd" style="left:32px"></div><div class="cell yd" style="left:40px"></div><div class="cell yd" style="left:48px"></div><div class="cell yd" style="left:56px"></div><div class="cell yd" style="left:64px"></div><div class="cell yd" style="left:72px"></div><div class="cell yd" style="left:80px"></div><div class="cell yd" style="left:88px"></div><div class="cell yd" style="left:96px"></div><div class="cell yd" style="left:104px"></div><div class="cell yd" style="left:112px"></div><div class="cell yd" style="left:120px"></div><div class="cell yd" style="left:128px"></div><div class="cell gd" style="left:136px"></div><div class="cell gd" style="left:144px"></div><div class="cell gd" style="left:152px"></div></div>
<div class="pv" style="left:1049.5px;top:111px;color:#e8485a">0<svg width="10" height="10.4" style="vertical-align:baseline;display:inline-block"><g fill="none" stroke="#e8485a" stroke-width="1.3"><circle cx="2.75" cy="3.25" r="1.4"/><circle cx="7.25" cy="8.15" r="1.4"/></g><path d="M2.4 9.3L7.6 2.3" stroke="#e8485a" stroke-width="1.25"/></svg></div>
<div class="a" style="left:1093px;top:112px;width:160px;height:21px"><div class="cell rl" style="left:0px"></div><div class="cell rd" style="left:8px"></div><div class="cell yd" style="left:16px"></div><div class="cell yd" style="left:24px"></div><div class="cell yd" style="left:32px"></div><div class="cell yd" style="left:40px"></div><div class="cell yd" style="left:48px"></div><div class="cell yd" style="left:56px"></div><div class="cell yd" style="left:64px"></div><div class="cell yd" style="left:72px"></div><div class="cell yd" style="left:80px"></div><div class="cell yd" style="left:88px"></div><div class="cell yd" style="left:96px"></div><div class="cell yd" style="left:104px"></div><div class="cell yd" style="left:112px"></div><div class="cell yd" style="left:120px"></div><div class="cell yd" style="left:128px"></div><div class="cell gd" style="left:136px"></div><div class="cell gd" style="left:144px"></div><div class="cell gd" style="left:152px"></div></div>
<div class="pv" style="left:1266.5px;top:111px;color:#e8485a">2<svg width="10" height="10.4" style="vertical-align:baseline;display:inline-block"><g fill="none" stroke="#e8485a" stroke-width="1.3"><circle cx="2.75" cy="3.25" r="1.4"/><circle cx="7.25" cy="8.15" r="1.4"/></g><path d="M2.4 9.3L7.6 2.3" stroke="#e8485a" stroke-width="1.25"/></svg></div>
<div class="a" style="left:1528px;top:112px;width:160px;height:21px"><div class="cell rd" style="left:0px"></div><div class="cell rd" style="left:8px"></div><div class="cell yd" style="left:16px"></div><div class="cell yd" style="left:24px"></div><div class="cell yd" style="left:32px"></div><div class="cell yd" style="left:40px"></div><div class="cell yd" style="left:48px"></div><div class="cell yd" style="left:56px"></div><div class="cell yd" style="left:64px"></div><div class="cell yd" style="left:72px"></div><div class="cell yd" style="left:80px"></div><div class="cell yd" style="left:88px"></div><div class="cell yd" style="left:96px"></div><div class="cell yd" style="left:104px"></div><div class="cell yd" style="left:112px"></div><div class="cell yd" style="left:120px"></div><div class="cell yd" style="left:128px"></div><div class="cell gd" style="left:136px"></div><div class="cell gd" style="left:144px"></div><div class="cell gd" style="left:152px"></div></div>
<div class="a" style="left:1746px;top:112px;width:144px;height:21px"><div class="cell rd" style="left:0px"></div><div class="cell rd" style="left:8px"></div><div class="cell yd" style="left:16px"></div><div class="cell yd" style="left:24px"></div><div class="cell yd" style="left:32px"></div><div class="cell yd" style="left:40px"></div><div class="cell yd" style="left:48px"></div><div class="cell yd" style="left:56px"></div><div class="cell yd" style="left:64px"></div><div class="cell yd" style="left:72px"></div><div class="cell yd" style="left:80px"></div><div class="cell yd" style="left:88px"></div><div class="cell yd" style="left:96px"></div><div class="cell yd" style="left:104px"></div><div class="cell yd" style="left:112px"></div><div class="cell yd" style="left:120px"></div><div class="cell gd" style="left:128px"></div><div class="cell gd" style="left:136px"></div></div>
<div class="hl" style="left:0;top:174px;width:1957px"></div>
<div class="td" style="left:217px;top:140px;width:217px">notebook</div>
<div class="td" style="left:435px;top:140px;width:216px">2023/04/<svg width="8.06" height="10.38" style="vertical-align:baseline;display:inline-block"><path d="M5.70 0V10.38H3.73V2.59L1.14 3.42V1.76L5.28 0Z" fill="#ccccdc"/></svg>9 <svg width="8.06" height="10.38" style="vertical-align:baseline;display:inline-block"><path d="M5.70 0V10.38H3.73V2.59L1.14 3.42V1.76L5.28 0Z" fill="#ccccdc"/></svg>4:25:00</div>
<div class="td" style="left:652px;top:140px;width:217px">4 day</div>
<div class="a" style="left:876px;top:147px;width:160px;height:21px"><div class="cell rl" style="left:0px"></div><div class="cell rd" style="left:8px"></div><div class="cell yd" style="left:16px"></div><div class="cell yd" style="left:24px"></div><div class="cell yd" style="left:32px"></div><div class="cell yd" style="left:40px"></div><div class="cell yd" style="left:48px"></div><div class="cell yd" style="left:56px"></div><div class="cell yd" style="left:64px"></div><div class="cell yd" style="left:72px"></div><div class="cell yd" style="left:80px"></div><div class="cell yd" style="left:88px"></div><div class="cell yd" style="left:96px"></div><div class="cell yd" style="left:104px"></div><div class="cell yd" style="left:112px"></div><div class="cell yd" style="left:120px"></div><div class="cell yd" style="left:128px"></div><div class="cell gd" style="left:136px"></div><div class="cell gd" style="left:144px"></div><div class="cell gd" style="left:152px"></div></div>
<div class="pv" style="left:1049.5px;top:146px;color:#e8485a">0<svg width="10" height="10.4" style="vertical-align:baseline;display:inline-block"><g fill="none" stroke="#e8485a" stroke-width="1.3"><circle cx="2.75" cy="3.25" r="1.4"/><circle cx="7.25" cy="8.15" r="1.4"/></g><path d="M2.4 9.3L7.6 2.3" stroke="#e8485a" stroke-width="1.25"/></svg></div>
<div class="a" style="left:1093px;top:147px;width:160px;height:21px"><div class="cell rl" style="left:0px"></div><div class="cell rd" style="left:8px"></div><div class="cell yd" style="left:16px"></div><div class="cell yd" style="left:24px"></div><div class="cell yd" style="left:32px"></div><div class="cell yd" style="left:40px"></div><div class="cell yd" style="left:48px"></div><div class="cell yd" style="left:56px"></div><div class="cell yd" style="left:64px"></div><div class="cell yd" style="left:72px"></div><div class="cell yd" style="left:80px"></div><div class="cell yd" style="left:88px"></div><div class="cell yd" style="left:96px"></div><div class="cell yd" style="left:104px"></div><div class="cell yd" style="left:112px"></div><div class="cell yd" style="left:120px"></div><div class="cell yd" style="left:128px"></div><div class="cell gd" style="left:136px"></div><div class="cell gd" style="left:144px"></div><div class="cell gd" style="left:152px"></div></div>
<div class="pv" style="left:1266.5px;top:146px;color:#e8485a">0<svg width="10" height="10.4" style="vertical-align:baseline;display:inline-block"><g fill="none" stroke="#e8485a" stroke-width="1.3"><circle cx="2.75" cy="3.25" r="1.4"/><circle cx="7.25" cy="8.15" r="1.4"/></g><path d="M2.4 9.3L7.6 2.3" stroke="#e8485a" stroke-width="1.25"/></svg></div>
<div class="a" style="left:1528px;top:147px;width:160px;height:21px"><div class="cell rd" style="left:0px"></div><div class="cell rd" style="left:8px"></div><div class="cell yd" style="left:16px"></div><div class="cell yd" style="left:24px"></div><div class="cell yd" style="left:32px"></div><div class="cell yd" style="left:40px"></div><div class="cell yd" style="left:48px"></div><div class="cell yd" style="left:56px"></div><div class="cell yd" style="left:64px"></div><div class="cell yd" style="left:72px"></div><div class="cell yd" style="left:80px"></div><div class="cell yd" style="left:88px"></div><div class="cell yd" style="left:96px"></div><div class="cell yd" style="left:104px"></div><div class="cell yd" style="left:112px"></div><div class="cell yd" style="left:120px"></div><div class="cell yd" style="left:128px"></div><div class="cell gd" style="left:136px"></div><div class="cell gd" style="left:144px"></div><div class="cell gd" style="left:152px"></div></div>
<div class="a" style="left:1746px;top:147px;width:144px;height:21px"><div class="cell rd" style="left:0px"></div><div class="cell rd" style="left:8px"></div><div class="cell yd" style="left:16px"></div><div class="cell yd" style="left:24px"></div><div class="cell yd" style="left:32px"></div><div class="cell yd" style="left:40px"></div><div class="cell yd" style="left:48px"></div><div class="cell yd" style="left:56px"></div><div class="cell yd" style="left:64px"></div><div class="cell yd" style="left:72px"></div><div class="cell yd" style="left:80px"></div><div class="cell yd" style="left:88px"></div><div class="cell yd" style="left:96px"></div><div class="cell yd" style="left:104px"></div><div class="cell yd" style="left:112px"></div><div class="cell yd" style="left:120px"></div><div class="cell gd" style="left:128px"></div><div class="cell gd" style="left:136px"></div></div>
<div class="hl" style="left:0;top:209px;width:1957px"></div>
<div class="td" style="left:217px;top:175px;width:217px">notebook</div>
<div class="td" style="left:435px;top:175px;width:216px">2023/04/<svg width="8.06" height="10.38" style="vertical-align:baseline;display:inline-block"><path d="M5.70 0V10.38H3.73V2.59L1.14 3.42V1.76L5.28 0Z" fill="#ccccdc"/></svg>9 <svg width="8.06" height="10.38" style="vertical-align:baseline;display:inline-block"><path d="M5.70 0V10.38H3.73V2.59L1.14 3.42V1.76L5.28 0Z" fill="#ccccdc"/></svg><svg width="8.06" height="10.38" style="vertical-align:baseline;display:inline-block"><path d="M5.70 0V10.38H3.73V2.59L1.14 3.42V1.76L5.28 0Z" fill="#ccccdc"/></svg>:<svg width="8.06" height="10.38" style="vertical-align:baseline;display:inline-block"><path d="M5.70 0V10.38H3.73V2.59L1.14 3.42V1.76L5.28 0Z" fill="#ccccdc"/></svg>5:00</div>
<div class="td" style="left:652px;top:175px;width:217px">3 day</div>
<div class="td" style="left:1305px;top:175px;width:216px"><svg width="8.06" height="10.38" style="vertical-align:baseline;display:inline-block"><path d="M5.70 0V10.38H3.73V2.59L1.14 3.42V1.76L5.28 0Z" fill="#ccccdc"/></svg></div>
<div class="a" style="left:876px;top:182px;width:160px;height:21px"><div class="cell rl" style="left:0px"></div><div class="cell rd" style="left:8px"></div><div class="cell yd" style="left:16px"></div><div class="cell yd" style="left:24px"></div><div class="cell yd" style="left:32px"></div><div class="cell yd" style="left:40px"></div><div class="cell yd" style="left:48px"></div><div class="cell yd" style="left:56px"></div><div class="cell yd" style="left:64px"></div><div class="cell yd" style="left:72px"></div><div class="cell yd" style="left:80px"></div><div class="cell yd" style="left:88px"></div><div class="cell yd" style="left:96px"></div><div class="cell yd" style="left:104px"></div><div class="cell yd" style="left:112px"></div><div class="cell yd" style="left:120px"></div><div class="cell yd" style="left:128px"></div><div class="cell gd" style="left:136px"></div><div class="cell gd" style="left:144px"></div><div class="cell gd" style="left:152px"></div></div>
<div class="pv" style="left:1049.5px;top:181px;color:#e8485a">2<svg width="10" height="10.4" style="vertical-align:baseline;display:inline-block"><g fill="none" stroke="#e8485a" stroke-width="1.3"><circle cx="2.75" cy="3.25" r="1.4"/><circle cx="7.25" cy="8.15" r="1.4"/></g><path d="M2.4 9.3L7.6 2.3" stroke="#e8485a" stroke-width="1.25"/></svg></div>
<div class="a" style="left:1093px;top:182px;width:160px;height:21px"><div class="cell rl" style="left:0px"></div><div class="cell rd" style="left:8px"></div><div class="cell yd" style="left:16px"></div><div class="cell yd" style="left:24px"></div><div class="cell yd" style="left:32px"></div><div class="cell yd" style="left:40px"></div><div class="cell yd" style="left:48px"></div><div class="cell yd" style="left:56px"></div><div class="cell yd" style="left:64px"></div><div class="cell yd" style="left:72px"></div><div class="cell yd" style="left:80px"></div><div class="cell yd" style="left:88px"></div><div class="cell yd" style="left:96px"></div><div class="cell yd" style="left:104px"></div><div class="cell yd" style="left:112px"></div><div class="cell yd" style="left:120px"></div><div class="cell yd" style="left:128px"></div><div class="cell gd" style="left:136px"></div><div class="cell gd" style="left:144px"></div><div class="cell gd" style="left:152px"></div></div>
<div class="pv" style="left:1266.5px;top:181px;color:#e8485a">0<svg width="10" height="10.4" style="vertical-align:baseline;display:inline-block"><g fill="none" stroke="#e8485a" stroke-width="1.3"><circle cx="2.75" cy="3.25" r="1.4"/><circle cx="7.25" cy="8.15" r="1.4"/></g><path d="M2.4 9.3L7.6 2.3" stroke="#e8485a" stroke-width="1.25"/></svg></div>
<div class="a" style="left:1528px;top:182px;width:160px;height:21px"><div class="cell rl" style="left:0px"></div><div class="cell rd" style="left:8px"></div><div class="cell yd" style="left:16px"></div><div class="cell yd" style="left:24px"></div><div class="cell yd" style="left:32px"></div><div class="cell yd" style="left:40px"></div><div class="cell yd" style="left:48px"></div><div class="cell yd" style="left:56px"></div><div class="cell yd" style="left:64px"></div><div class="cell yd" style="left:72px"></div><div class="cell yd" style="left:80px"></div><div class="cell yd" style="left:88px"></div><div class="cell yd" style="left:96px"></div><div class="cell yd" style="left:104px"></div><div class="cell yd" style="left:112px"></div><div class="cell yd" style="left:120px"></div><div class="cell yd" style="left:128px"></div><div class="cell gd" style="left:136px"></div><div class="cell gd" style="left:144px"></div><div class="cell gd" style="left:152px"></div></div>
<div class="pv" style="left:1701.5px;top:181px;color:#e8485a">0<svg width="10" height="10.4" style="vertical-align:baseline;display:inline-block"><g fill="none" stroke="#e8485a" stroke-width="1.3"><circle cx="2.75" cy="3.25" r="1.4"/><circle cx="7.25" cy="8.15" r="1.4"/></g><path d="M2.4 9.3L7.6 2.3" stroke="#e8485a" stroke-width="1.25"/></svg></div>
<div class="a" style="left:1746px;top:182px;width:144px;height:21px"><div class="cell rl" style="left:0px"></div><div class="cell rd" style="left:8px"></div><div class="cell yd" style="left:16px"></div><div class="cell yd" style="left:24px"></div><div class="cell yd" style="left:32px"></div><div class="cell yd" style="left:40px"></div><div class="cell yd" style="left:48px"></div><div class="cell yd" style="left:56px"></div><div class="cell yd" style="left:64px"></div><div class="cell yd" style="left:72px"></div><div class="cell yd" style="left:80px"></div><div class="cell yd" style="left:88px"></div><div class="cell yd" style="left:96px"></div><div class="cell yd" style="left:104px"></div><div class="cell yd" style="left:112px"></div><div class="cell yd" style="left:120px"></div><div class="cell gd" style="left:128px"></div><div class="cell gd" style="left:136px"></div></div>
<div class="pv" style="left:1899.7px;top:181px;color:#e8485a">0<svg width="10" height="10.4" style="vertical-align:baseline;display:inline-block"><g fill="none" stroke="#e8485a" stroke-width="1.3"><circle cx="2.75" cy="3.25" r="1.4"/><circle cx="7.25" cy="8.15" r="1.4"/></g><path d="M2.4 9.3L7.6 2.3" stroke="#e8485a" stroke-width="1.25"/></svg></div>
<div class="hl" style="left:0;top:244px;width:1957px"></div>
<div class="td" style="left:217px;top:210px;width:217px">notebook</div>
<div class="td" style="left:435px;top:210px;width:216px">2023/04/<svg width="8.06" height="10.38" style="vertical-align:baseline;display:inline-block"><path d="M5.70 0V10.38H3.73V2.59L1.14 3.42V1.76L5.28 0Z" fill="#ccccdc"/></svg>8 <svg width="8.06" height="10.38" style="vertical-align:baseline;display:inline-block"><path d="M5.70 0V10.38H3.73V2.59L1.14 3.42V1.76L5.28 0Z" fill="#ccccdc"/></svg>6:40:00</div>
<div class="td" style="left:652px;top:210px;width:217px">6 day</div>
<div class="a" style="left:876px;top:217px;width:160px;height:21px"><div class="cell rl" style="left:0px"></div><div class="cell rd" style="left:8px"></div><div class="cell yd" style="left:16px"></div><div class="cell yd" style="left:24px"></div><div class="cell yd" style="left:32px"></div><div class="cell yd" style="left:40px"></div><div class="cell yd" style="left:48px"></div><div class="cell yd" style="left:56px"></div><div class="cell yd" style="left:64px"></div><div class="cell yd" style="left:72px"></div><div class="cell yd" style="left:80px"></div><div class="cell yd" style="left:88px"></div><div class="cell yd" style="left:96px"></div><div class="cell yd" style="left:104px"></div><div class="cell yd" style="left:112px"></div><div class="cell yd" style="left:120px"></div><div class="cell yd" style="left:128px"></div><div class="cell gd" style="left:136px"></div><div class="cell gd" style="left:144px"></div><div class="cell gd" style="left:152px"></div></div>
<div class="pv" style="left:1049.5px;top:216px;color:#e8485a">0<svg width="10" height="10.4" style="vertical-align:baseline;display:inline-block"><g fill="none" stroke="#e8485a" stroke-width="1.3"><circle cx="2.75" cy="3.25" r="1.4"/><circle cx="7.25" cy="8.15" r="1.4"/></g><path d="M2.4 9.3L7.6 2.3" stroke="#e8485a" stroke-width="1.25"/></svg></div>
<div class="a" style="left:1093px;top:217px;width:160px;height:21px"><div class="cell rl" style="left:0px"></div><div class="cell rd" style="left:8px"></div><div class="cell yd" style="left:16px"></div><div class="cell yd" style="left:24px"></div><div class="cell yd" style="left:32px"></div><div class="cell yd" style="left:40px"></div><div class="cell yd" style="left:48px"></div><div class="cell yd" style="left:56px"></div><div class="cell yd" style="left:64px"></div><div class="cell yd" style="left:72px"></div><div class="cell yd" style="left:80px"></div><div class="cell yd" style="left:88px"></div><div class="cell yd" style="left:96px"></div><div class="cell yd" style="left:104px"></div><div class="cell yd" style="left:112px"></div><div class="cell yd" style="left:120px"></div><div class="cell yd" style="left:128px"></div><div class="cell gd" style="left:136px"></div><div class="cell gd" style="left:144px"></div><div class="cell gd" style="left:152px"></div></div>
<div class="pv" style="left:1266.5px;top:216px;color:#e8485a">0<svg width="10" height="10.4" style="vertical-align:baseline;display:inline-block"><g fill="none" stroke="#e8485a" stroke-width="1.3"><circle cx="2.75" cy="3.25" r="1.4"/><circle cx="7.25" cy="8.15" r="1.4"/></g><path d="M2.4 9.3L7.6 2.3" stroke="#e8485a" stroke-width="1.25"/></svg></div>
<div class="a" style="left:1528px;top:217px;width:160px;height:21px"><div class="cell rd" style="left:0px"></div><div class="cell rd" style="left:8px"></div><div class="cell yd" style="left:16px"></div><div class="cell yd" style="left:24px"></div><div class="cell yd" style="left:32px"></div><div class="cell yd" style="left:40px"></div><div class="cell yd" style="left:48px"></div><div class="cell yd" style="left:56px"></div><div class="cell yd" style="left:64px"></div><div class="cell yd" style="left:72px"></div><div class="cell yd" style="left:80px"></div><div class="cell yd" style="left:88px"></div><div class="cell yd" style="left:96px"></div><div class="cell yd" style="left:104px"></div><div class="cell yd" style="left:112px"></div><div class="cell yd" style="left:120px"></div><div class="cell yd" style="left:128px"></div><div class="cell gd" style="left:136px"></div><div class="cell gd" style="left:144px"></div><div class="cell gd" style="left:152px"></div></div>
<div class="a" style="left:1746px;top:217px;width:144px;height:21px"><div class="cell rd" style="left:0px"></div><div class="cell rd" style="left:8px"></div><div class="cell yd" style="left:16px"></div><div class="cell yd" style="left:24px"></div><div class="cell yd" style="left:32px"></div><div class="cell yd" style="left:40px"></div><div class="cell yd" style="left:48px"></div><div class="cell yd" style="left:56px"></div><div class="cell yd" style="left:64px"></div><div class="cell yd" style="left:72px"></div><div class="cell yd" style="left:80px"></div><div class="cell yd" style="left:88px"></div><div class="cell yd" style="left:96px"></div><div class="cell yd" style="left:104px"></div><div class="cell yd" style="left:112px"></div><div class="cell yd" style="left:120px"></div><div class="cell gd" style="left:128px"></div><div class="cell gd" style="left:136px"></div></div>
<div class="hl" style="left:0;top:279px;width:1957px"></div>
<div class="td" style="left:217px;top:245px;width:217px">notebook</div>
<div class="td" style="left:435px;top:245px;width:216px">2023/04/<svg width="8.06" height="10.38" style="vertical-align:baseline;display:inline-block"><path d="M5.70 0V10.38H3.73V2.59L1.14 3.42V1.76L5.28 0Z" fill="#ccccdc"/></svg>7 <svg width="8.06" height="10.38" style="vertical-align:baseline;display:inline-block"><path d="M5.70 0V10.38H3.73V2.59L1.14 3.42V1.76L5.28 0Z" fill="#ccccdc"/></svg>6:20:00</div>
<div class="td" style="left:652px;top:245px;width:217px">4 day</div>
<div class="td" style="left:1305px;top:245px;width:216px"><svg width="8.06" height="10.38" style="vertical-align:baseline;display:inline-block"><path d="M5.70 0V10.38H3.73V2.59L1.14 3.42V1.76L5.28 0Z" fill="#ccccdc"/></svg></div>
<div class="a" style="left:876px;top:252px;width:160px;height:21px"><div class="cell rl" style="left:0px"></div><div class="cell rd" style="left:8px"></div><div class="cell yd" style="left:16px"></div><div class="cell yd" style="left:24px"></div><div class="cell yd" style="left:32px"></div><div class="cell yd" style="left:40px"></div><div class="cell yd" style="left:48px"></div><div class="cell yd" style="left:56px"></div><div class="cell yd" style="left:64px"></div><div class="cell yd" style="left:72px"></div><div class="cell yd" style="left:80px"></div><div class="cell yd" style="left:88px"></div><div class="cell yd" style="left:96px"></div><div class="cell yd" style="left:104px"></div><div class="cell yd" style="left:112px"></div><div class="cell yd" style="left:120px"></div><div class="cell yd" style="left:128px"></div><div class="cell gd" style="left:136px"></div><div class="cell gd" style="left:144px"></div><div class="cell gd" style="left:152px"></div></div>
<div class="pv" style="left:1049.5px;top:251px;color:#e8485a">0<svg width="10" height="10.4" style="vertical-align:baseline;display:inline-block"><g fill="none" stroke="#e8485a" stroke-width="1.3"><circle cx="2.75" cy="3.25" r="1.4"/><circle cx="7.25" cy="8.15" r="1.4"/></g><path d="M2.4 9.3L7.6 2.3" stroke="#e8485a" stroke-width="1.25"/></svg></div>
<div class="a" style="left:1093px;top:252px;width:160px;height:21px"><div class="cell rl" style="left:0px"></div><div class="cell rl" style="left:8px"></div><div class="cell yd" style="left:16px"></div><div class="cell yd" style="left:24px"></div><div class="cell yd" style="left:32px"></div><div class="cell yd" style="left:40px"></div><div class="cell yd" style="left:48px"></div><div class="cell yd" style="left:56px"></div><div class="cell yd" style="left:64px"></div><div class="cell yd" style="left:72px"></div><div class="cell yd" style="left:80px"></div><div class="cell yd" style="left:88px"></div><div class="cell yd" style="left:96px"></div><div class="cell yd" style="left:104px"></div><div class="cell yd" style="left:112px"></div><div class="cell yd" style="left:120px"></div><div class="cell yd" style="left:128px"></div><div class="cell gd" style="left:136px"></div><div class="cell gd" style="left:144px"></div><div class="cell gd" style="left:152px"></div></div>
<div class="pv" style="left:1266.5px;top:251px;color:#e8485a">5<svg width="10" height="10.4" style="vertical-align:baseline;display:inline-block"><g fill="none" stroke="#e8485a" stroke-width="1.3"><circle cx="2.75" cy="3.25" r="1.4"/><circle cx="7.25" cy="8.15" r="1.4"/></g><path d="M2.4 9.3L7.6 2.3" stroke="#e8485a" stroke-width="1.25"/></svg></div>
<div class="a" style="left:1528px;top:252px;width:160px;height:21px"><div class="cell rl" style="left:0px"></div><div class="cell rd" style="left:8px"></div><div class="cell yd" style="left:16px"></div><div class="cell yd" style="left:24px"></div><div class="cell yd" style="left:32px"></div><div class="cell yd" style="left:40px"></div><div class="cell yd" style="left:48px"></div><div class="cell yd" style="left:56px"></div><div class="cell yd" style="left:64px"></div><div class="cell yd" style="left:72px"></div><div class="cell yd" style="left:80px"></div><div class="cell yd" style="left:88px"></div><div class="cell yd" style="left:96px"></div><div class="cell yd" style="left:104px"></div><div class="cell yd" style="left:112px"></div><div class="cell yd" style="left:120px"></div><div class="cell yd" style="left:128px"></div><div class="cell gd" style="left:136px"></div><div class="cell gd" style="left:144px"></div><div class="cell gd" style="left:152px"></div></div>
<div class="pv" style="left:1701.5px;top:251px;color:#e8485a">0<svg width="10" height="10.4" style="vertical-align:baseline;display:inline-block"><g fill="none" stroke="#e8485a" stroke-width="1.3"><circle cx="2.75" cy="3.25" r="1.4"/><circle cx="7.25" cy="8.15" r="1.4"/></g><path d="M2.4 9.3L7.6 2.3" stroke="#e8485a" stroke-width="1.25"/></svg></div>
<div class="a" style="left:1746px;top:252px;width:136px;height:21px"><div class="cell rl" style="left:0px"></div><div class="cell rl" style="left:8px"></div><div class="cell yl" style="left:16px"></div><div class="cell yl" style="left:24px"></div><div class="cell yl" style="left:32px"></div><div class="cell yl" style="left:40px"></div><div class="cell yl" style="left:48px"></div><div class="cell yd" style="left:56px"></div><div class="cell yd" style="left:64px"></div><div class="cell yd" style="left:72px"></div><div class="cell yd" style="left:80px"></div><div class="cell yd" style="left:88px"></div><div class="cell yd" style="left:96px"></div><div class="cell yd" style="left:104px"></div><div class="cell yd" style="left:112px"></div><div class="cell gd" style="left:120px"></div><div class="cell gd" style="left:128px"></div></div>
<div class="pv" style="left:1891.6px;top:251px;color:#f0d82c;-webkit-text-stroke:0.35px #f0d82c">39<svg width="10" height="10.4" style="vertical-align:baseline;display:inline-block"><g fill="none" stroke="#f0d82c" stroke-width="1.3"><circle cx="2.75" cy="3.25" r="1.4"/><circle cx="7.25" cy="8.15" r="1.4"/></g><path d="M2.4 9.3L7.6 2.3" stroke="#f0d82c" stroke-width="1.25"/></svg></div>
</div>
<div class="chk" style="left:9px;top:653px;width:202px;height:269px;background-position:4px 1px"></div>
<div class="a" style="left:1956px;top:618px;width:8px;height:91px;border-radius:4px;background:#383b41"></div>
</body></html>
